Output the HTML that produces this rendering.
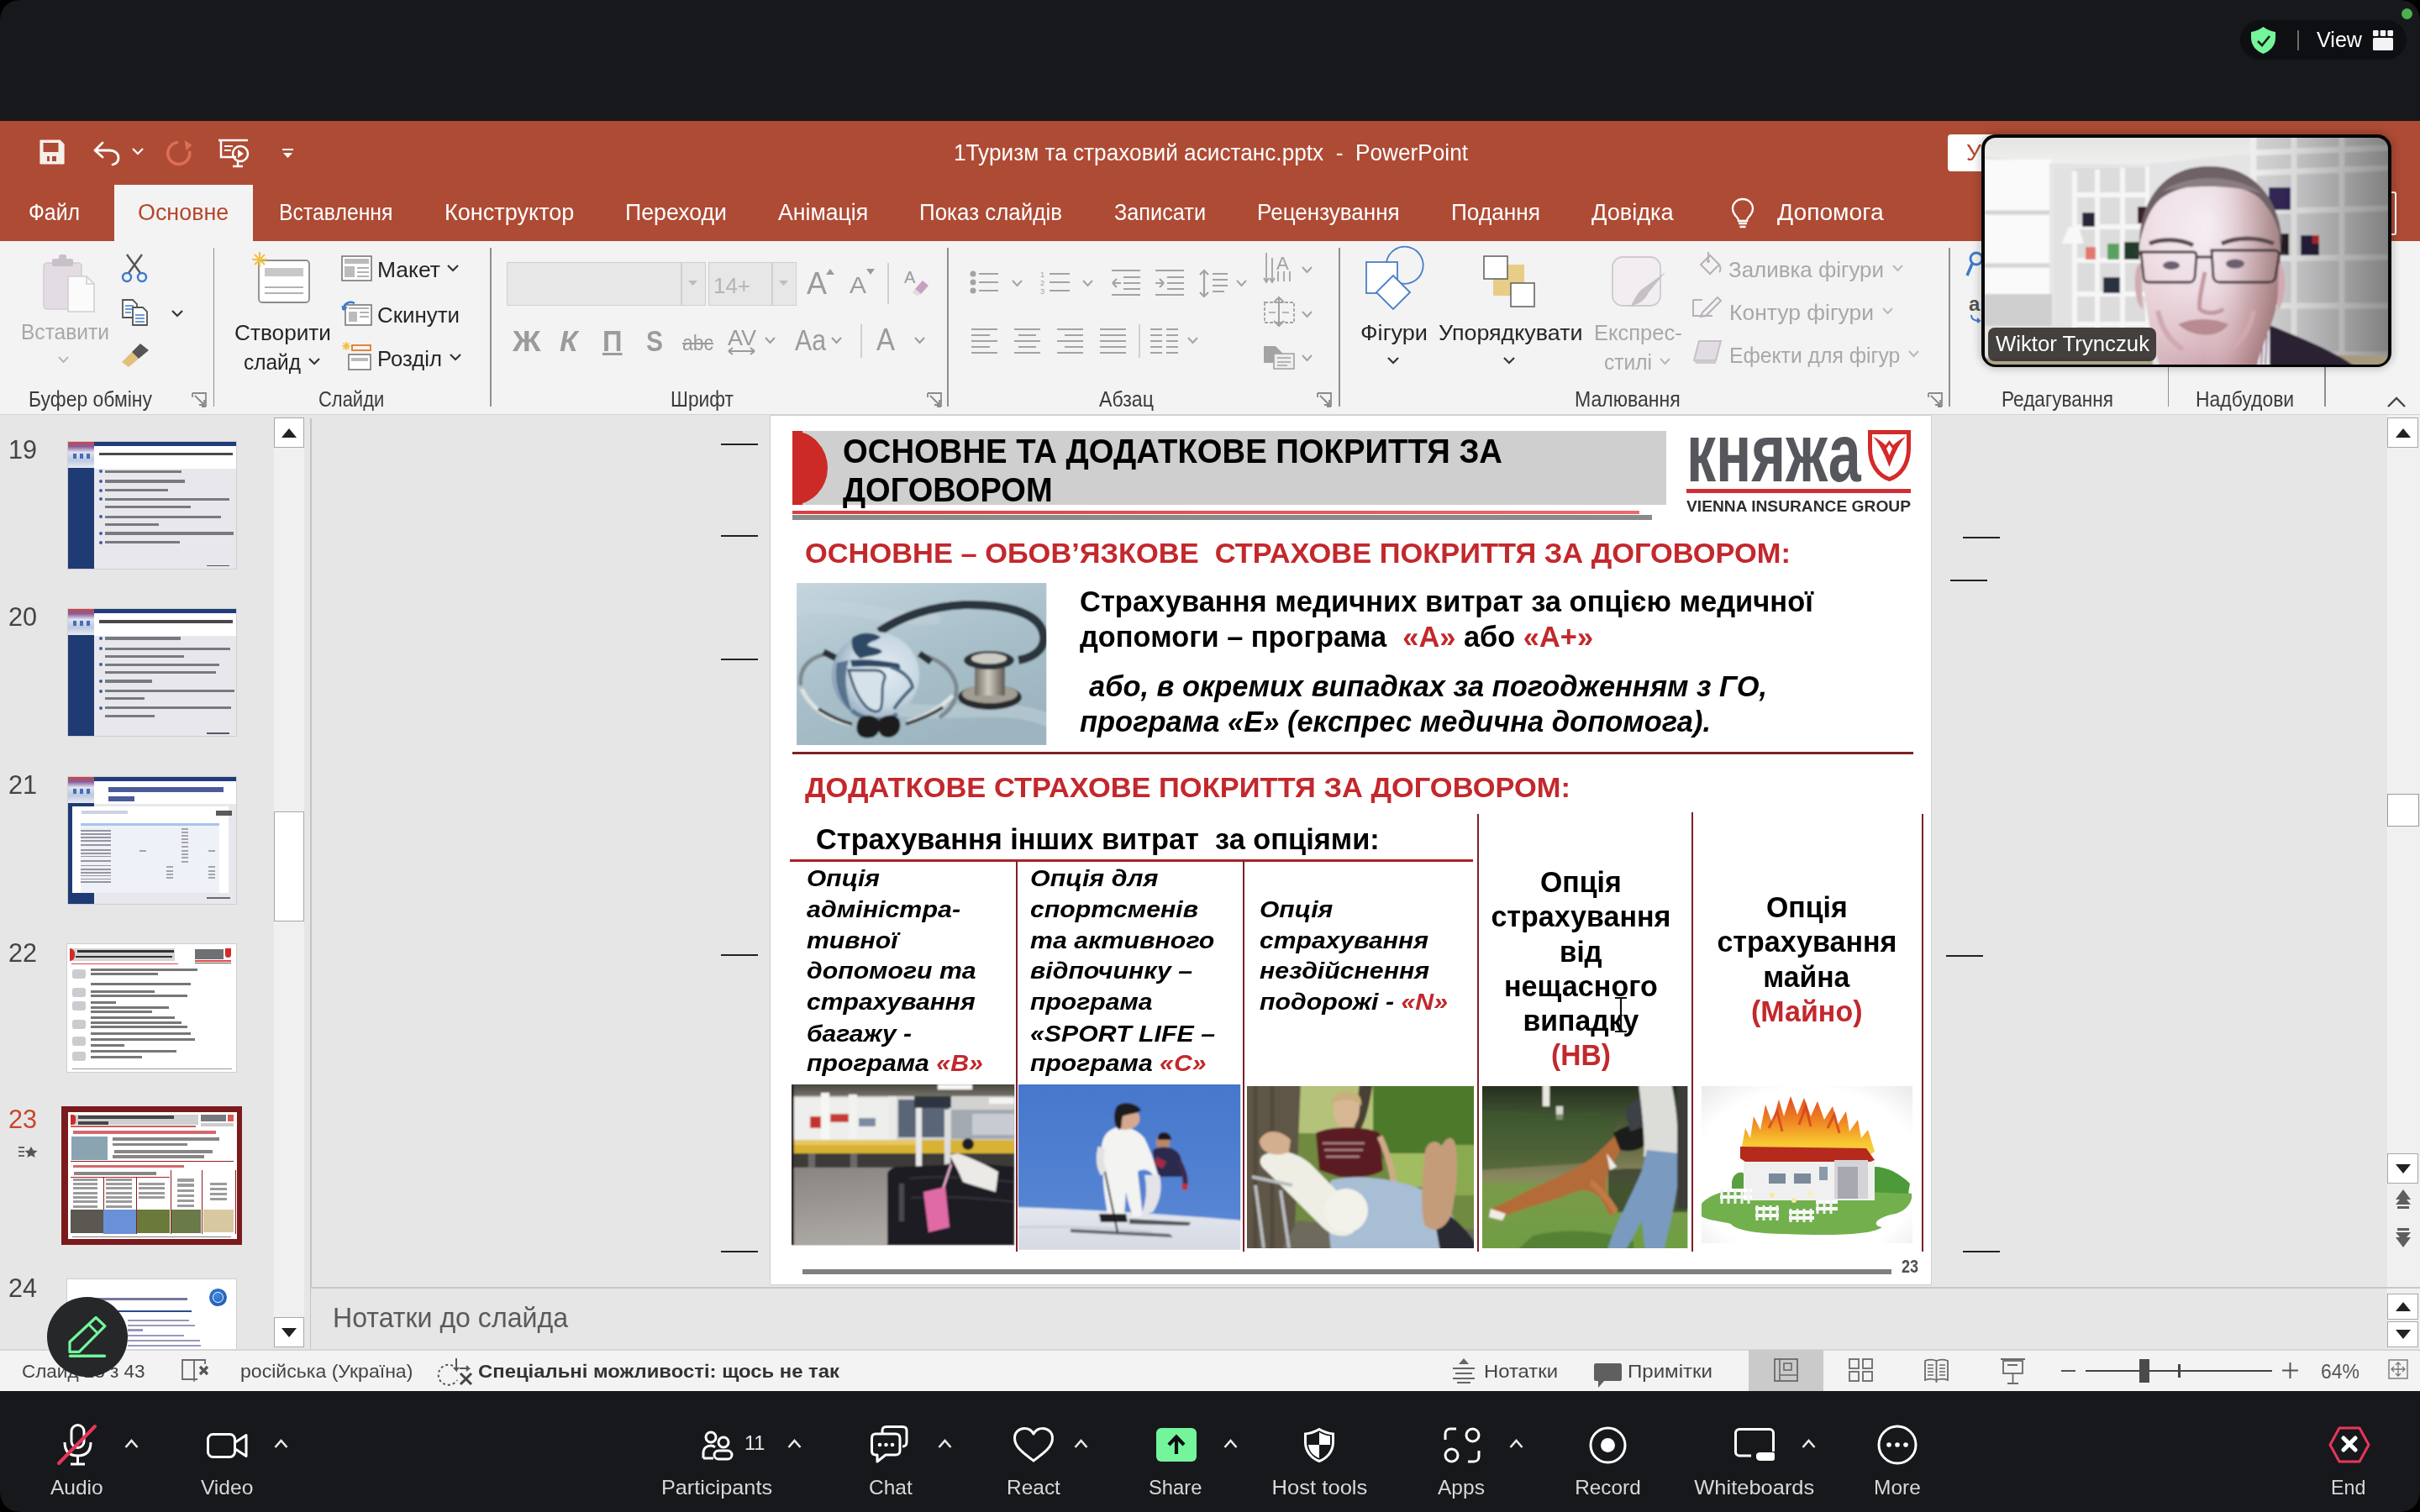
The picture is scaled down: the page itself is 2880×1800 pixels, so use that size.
<!DOCTYPE html><html><head><meta charset="utf-8"><style>
html,body{margin:0;padding:0;}
body{width:2880px;height:1800px;overflow:hidden;position:relative;background:#17181c;font-family:"Liberation Sans",sans-serif;}
.a{position:absolute;}
.t{white-space:pre;line-height:1;}
svg{overflow:visible;}
</style></head><body>
<div class="a" style="left:0.0px;top:0.0px;width:2880.0px;height:144.0px;background:#17181c;"></div>
<div class="a" style="left:2666.0px;top:24.0px;width:198.0px;height:47.0px;background:#0e0f12;border-radius:24px;"></div>
<svg class="a" style="left:2679.0px;top:32.0px;" width="29" height="32" viewBox="0 0 29 32"><path d="M14.5 0 C19 3.5 24 5 29 6 L29 13 C29 23 22 29 14.5 32 C7 29 0 23 0 13 L0 6 C5 5 10 3.5 14.5 0Z" fill="#74f59c"/><path d="M8 17 L13 22 L22 11" stroke="#1a1a1a" stroke-width="2.6" fill="none"/></svg>
<div class="a" style="left:2734.0px;top:36.0px;width:2.0px;height:24.0px;background:#6b6b6b;"></div>
<span class="a t" style="left:2757.0px;transform:scaleX(1.0047);transform-origin:0 50%;top:34.8px;font-size:25px;color:#ffffff;">View</span>
<svg class="a" style="left:2824.0px;top:36.0px;" width="24" height="24" viewBox="0 0 24 24"><rect x="0" y="0" width="6.5" height="7" rx="1.2" fill="#f3f3f6"/><rect x="8.7" y="0" width="6.5" height="7" rx="1.2" fill="#f3f3f6"/><rect x="17.4" y="0" width="6.6" height="7" rx="1.2" fill="#f3f3f6"/><rect x="0" y="9" width="24" height="15" rx="1.5" fill="#f3f3f6"/></svg>
<div class="a" style="left:2857.5px;top:9.5px;width:13.0px;height:13.0px;background:#4caf50;border-radius:50%;"></div>
<div class="a" style="left:0.0px;top:144.0px;width:2880.0px;height:143.0px;background:#ae4b35;"></div>
<svg class="a" style="left:47.0px;top:166.0px;" width="30" height="30" viewBox="0 0 30 30"><path d="M1.5 1.5 H24 L28.5 6 V28.5 H1.5 Z" fill="#f6f0ea" stroke="#f6f0ea" stroke-width="2.2" stroke-linejoin="round"/><path d="M4.5 4 H22.5 V15 H4.5Z" fill="#ae4b35"/><path d="M9 20 H12 V26 H9Z M15 20 H20 V26 H15Z" fill="#ae4b35"/></svg>
<svg class="a" style="left:110.0px;top:167.0px;" width="34" height="30" viewBox="0 0 34 30"><path d="M3 12 L12 3 M3 12 L12 20" stroke="#fff" stroke-width="2.8" fill="none" stroke-linecap="round"/><path d="M4 12 H20 C27 12 31 16 31 21 C31 25 28 28 24 29" stroke="#fff" stroke-width="2.8" fill="none" stroke-linecap="round"/></svg>
<svg class="a" style="left:157.0px;top:176.0px;" width="14" height="9" viewBox="0 0 14 9"><path d="M1 1 L7 7 L13 1" stroke="#fff" stroke-width="2.2" fill="none"/></svg>
<svg class="a" style="left:197.0px;top:166.0px;" width="32" height="32" viewBox="0 0 32 32"><path d="M15 3.5 A13 13 0 1 0 28.5 14" fill="none" stroke="#dd6e55" stroke-width="3.6"/><path d="M22.5 1 L31.5 6.5 L24.5 13.5 Z" fill="#dd6e55"/></svg>
<svg class="a" style="left:259.0px;top:165.0px;" width="37" height="34" viewBox="0 0 37 34"><path d="M1 2 H36" stroke="#fff" stroke-width="2.5"/><path d="M4 3 V22 H22" stroke="#fff" stroke-width="2.5" fill="none"/><path d="M8 9 H18 M8 14 H16" stroke="#fff" stroke-width="2"/><circle cx="27" cy="18" r="9" fill="none" stroke="#fff" stroke-width="2.5"/><path d="M24 13 L31 18 L24 23Z" fill="#fff"/><path d="M18 33 H30 M24 27 V33" stroke="#fff" stroke-width="2.5"/></svg>
<svg class="a" style="left:336.0px;top:177.0px;" width="13" height="11" viewBox="0 0 13 11"><path d="M0 1 H13" stroke="#fff" stroke-width="2"/><path d="M1 5 H12 L6.5 11 Z" fill="#fff"/></svg>
<span class="a t" style="left:1135.0px;transform:scaleX(0.9705);transform-origin:0 50%;top:169.1px;font-size:27px;color:#ffffff;">1Туризм та страховий асистанс.pptx  -  PowerPoint</span>
<div class="a" style="left:2318.0px;top:159.5px;width:120.0px;height:44.0px;background:#fff;border-radius:4px;"></div>
<span class="a t" style="left:2340.0px;transform:scaleX(1.0492);transform-origin:0 50%;top:169.1px;font-size:27px;color:#b7472a;">У</span>
<div class="a" style="left:2600.0px;top:228.0px;width:252.0px;height:52.0px;border:2px solid #fff;border-radius:3px;box-sizing:border-box;"></div>
<div class="a" style="left:136.0px;top:220.0px;width:165.0px;height:67.0px;background:#f3f3f3;"></div>
<span class="a t" style="left:34.0px;transform:scaleX(0.9188);transform-origin:0 50%;top:239.6px;font-size:27px;color:#ffffff;">Файл</span>
<span class="a t" style="left:163.7px;transform:scaleX(0.9963);transform-origin:0 50%;top:239.6px;font-size:27px;color:#b5462c;">Основне</span>
<span class="a t" style="left:331.5px;transform:scaleX(0.9184);transform-origin:0 50%;top:239.6px;font-size:27px;color:#ffffff;">Вставлення</span>
<span class="a t" style="left:528.6px;transform:scaleX(1.0029);transform-origin:0 50%;top:239.6px;font-size:27px;color:#ffffff;">Конструктор</span>
<span class="a t" style="left:744.0px;transform:scaleX(0.9891);transform-origin:0 50%;top:239.6px;font-size:27px;color:#ffffff;">Переходи</span>
<span class="a t" style="left:925.6px;transform:scaleX(0.9862);transform-origin:0 50%;top:239.6px;font-size:27px;color:#ffffff;">Анімація</span>
<span class="a t" style="left:1094.0px;transform:scaleX(0.9611);transform-origin:0 50%;top:239.6px;font-size:27px;color:#ffffff;">Показ слайдів</span>
<span class="a t" style="left:1325.6px;transform:scaleX(0.9372);transform-origin:0 50%;top:239.6px;font-size:27px;color:#ffffff;">Записати</span>
<span class="a t" style="left:1496.0px;transform:scaleX(0.9641);transform-origin:0 50%;top:239.6px;font-size:27px;color:#ffffff;">Рецензування</span>
<span class="a t" style="left:1727.0px;transform:scaleX(0.9721);transform-origin:0 50%;top:239.6px;font-size:27px;color:#ffffff;">Подання</span>
<span class="a t" style="left:1894.0px;transform:scaleX(1.0059);transform-origin:0 50%;top:239.6px;font-size:27px;color:#ffffff;">Довідка</span>
<span class="a t" style="left:2115.0px;transform:scaleX(1.0455);transform-origin:0 50%;top:239.6px;font-size:27px;color:#ffffff;">Допомога</span>
<svg class="a" style="left:2060.0px;top:235.0px;" width="28" height="37" viewBox="0 0 28 37"><path d="M14 2 C6.5 2 2 7.5 2 13.5 C2 18 4.5 21 7 23.5 C8.5 25 9 26.5 9 28 H19 C19 26.5 19.5 25 21 23.5 C23.5 21 26 18 26 13.5 C26 7.5 21.5 2 14 2Z" fill="none" stroke="#fff" stroke-width="2.3"/><path d="M9 31 H19 M10.5 35 H17.5" stroke="#fff" stroke-width="2.3"/></svg>
<div class="a" style="left:0.0px;top:287.0px;width:2880.0px;height:207.0px;background:#f3f3f3;"></div>
<div class="a" style="left:0.0px;top:493.0px;width:2880.0px;height:1.5px;background:#d2d2d2;"></div>
<div class="a" style="left:253.6px;top:295.0px;width:1.8px;height:189.0px;background:#8f8f8f;"></div>
<div class="a" style="left:583.3px;top:295.0px;width:1.8px;height:189.0px;background:#8f8f8f;"></div>
<div class="a" style="left:1127.3px;top:295.0px;width:1.8px;height:189.0px;background:#8f8f8f;"></div>
<div class="a" style="left:1593.3px;top:295.0px;width:1.8px;height:189.0px;background:#8f8f8f;"></div>
<div class="a" style="left:2319.3px;top:295.0px;width:1.8px;height:189.0px;background:#8f8f8f;"></div>
<div class="a" style="left:2579.6px;top:295.0px;width:1.8px;height:189.0px;background:#8f8f8f;"></div>
<div class="a" style="left:2766.3px;top:295.0px;width:1.8px;height:189.0px;background:#8f8f8f;"></div>
<span class="a t" style="left:33.6px;transform:scaleX(0.9180);transform-origin:0 50%;top:463.3px;font-size:25px;color:#3b3b3b;">Буфер обміну</span>
<span class="a t" style="left:378.5px;transform:scaleX(0.8780);transform-origin:0 50%;top:463.3px;font-size:25px;color:#3b3b3b;">Слайди</span>
<span class="a t" style="left:798.0px;transform:scaleX(0.9117);transform-origin:0 50%;top:463.3px;font-size:25px;color:#3b3b3b;">Шрифт</span>
<span class="a t" style="left:1308.0px;transform:scaleX(0.9267);transform-origin:0 50%;top:463.3px;font-size:25px;color:#3b3b3b;">Абзац</span>
<span class="a t" style="left:1874.0px;transform:scaleX(0.9222);transform-origin:0 50%;top:463.3px;font-size:25px;color:#3b3b3b;">Малювання</span>
<span class="a t" style="left:2381.5px;transform:scaleX(0.9041);transform-origin:0 50%;top:463.3px;font-size:25px;color:#3b3b3b;">Редагування</span>
<span class="a t" style="left:2612.8px;transform:scaleX(0.9175);transform-origin:0 50%;top:463.3px;font-size:25px;color:#3b3b3b;">Надбудови</span>
<svg class="a" style="left:228.0px;top:467.0px;" width="18" height="18" viewBox="0 0 18 18"><path d="M1 1 H17 V17 M1 1 V6 M12 17 H17" stroke="#8a8a8a" stroke-width="1.8" fill="none"/><path d="M4 4 L15 15 M9 15 H15 V9" stroke="#8a8a8a" stroke-width="1.8" fill="none"/></svg>
<svg class="a" style="left:1103.0px;top:467.0px;" width="18" height="18" viewBox="0 0 18 18"><path d="M1 1 H17 V17 M1 1 V6 M12 17 H17" stroke="#8a8a8a" stroke-width="1.8" fill="none"/><path d="M4 4 L15 15 M9 15 H15 V9" stroke="#8a8a8a" stroke-width="1.8" fill="none"/></svg>
<svg class="a" style="left:1567.0px;top:467.0px;" width="18" height="18" viewBox="0 0 18 18"><path d="M1 1 H17 V17 M1 1 V6 M12 17 H17" stroke="#8a8a8a" stroke-width="1.8" fill="none"/><path d="M4 4 L15 15 M9 15 H15 V9" stroke="#8a8a8a" stroke-width="1.8" fill="none"/></svg>
<svg class="a" style="left:2294.0px;top:467.0px;" width="18" height="18" viewBox="0 0 18 18"><path d="M1 1 H17 V17 M1 1 V6 M12 17 H17" stroke="#8a8a8a" stroke-width="1.8" fill="none"/><path d="M4 4 L15 15 M9 15 H15 V9" stroke="#8a8a8a" stroke-width="1.8" fill="none"/></svg>
<svg class="a" style="left:2840.0px;top:472.0px;" width="24" height="14" viewBox="0 0 24 14"><path d="M2 12 L12 2 L22 12" stroke="#444" stroke-width="2.4" fill="none"/></svg>
<svg class="a" style="left:50.0px;top:303.0px;" width="63" height="69" viewBox="0 0 63 69"><rect x="2" y="10" width="45" height="55" rx="4" fill="#e3dde3" stroke="#d3cdd3" stroke-width="1.5"/><rect x="12" y="5" width="25" height="9" rx="2" fill="#c8c0c8"/><rect x="20" y="0" width="9" height="7" rx="2" fill="#c8c0c8"/><path d="M31 26 H53 L62 35 V68 H31 Z" fill="#fbfbfb" stroke="#cfcfcf" stroke-width="1.6"/><path d="M53 26 V35 H62" fill="none" stroke="#cfcfcf" stroke-width="1.6"/></svg>
<span class="a t" style="left:25.0px;transform:scaleX(0.9820);transform-origin:0 50%;top:382.8px;font-size:25px;color:#a8a8a8;">Вставити</span>
<svg class="a" style="left:69.0px;top:424.0px;" width="13" height="8" viewBox="0 0 13 8"><path d="M1 1 L6.5 7 L12 1" stroke="#b8b8b8" stroke-width="2" fill="none"/></svg>
<svg class="a" style="left:145.0px;top:303.0px;" width="30" height="33" viewBox="0 0 30 33"><path d="M6 0 L22 22 M24 0 L8 22" stroke="#555" stroke-width="2.4"/><circle cx="6" cy="27" r="5" fill="none" stroke="#3f79c9" stroke-width="2.4"/><circle cx="24" cy="27" r="5" fill="none" stroke="#3f79c9" stroke-width="2.4"/></svg>
<svg class="a" style="left:145.0px;top:356.0px;" width="31" height="32" viewBox="0 0 31 32"><path d="M1 1 H13 L18 6 V22 H1 Z" fill="#fff" stroke="#555" stroke-width="1.8"/><path d="M13 10 H25 L30 15 V31 H13 Z" fill="#fff" stroke="#555" stroke-width="1.8"/><path d="M4 8 H14 M4 12 H14 M4 16 H11 M16 19 H27 M16 23 H27 M16 27 H27" stroke="#3f79c9" stroke-width="1.4"/></svg>
<svg class="a" style="left:204.0px;top:369.0px;" width="14" height="9" viewBox="0 0 14 9"><path d="M1 1 L7 7 L13 1" stroke="#333" stroke-width="2.2" fill="none"/></svg>
<svg class="a" style="left:143.0px;top:409.0px;" width="35" height="29" viewBox="0 0 35 29"><path d="M2 22 L14 10 L22 18 L10 28 Z" fill="#e2c07a"/><path d="M14 10 L24 0 L34 8 L22 18Z" fill="#555"/></svg>
<svg class="a" style="left:300.0px;top:300.0px;" width="70" height="62" viewBox="0 0 70 62"><rect x="8" y="10" width="60" height="50" rx="4" fill="#fff" stroke="#8c8c8c" stroke-width="1.8"/><rect x="15" y="19" width="46" height="10" fill="#c8c8c8"/><path d="M15 42 H61 M15 49 H61" stroke="#9a9a9a" stroke-width="1.4"/><g stroke="#f0c040" stroke-width="2"><path d="M9 0 V18 M0 9 H18 M3 3 L15 15 M15 3 L3 15"/></g></svg>
<span class="a t" style="left:279.0px;transform:scaleX(1.0483);transform-origin:0 50%;top:383.6px;font-size:25px;color:#262626;">Створити</span>
<span class="a t" style="left:290.0px;transform:scaleX(0.9778);transform-origin:0 50%;top:419.3px;font-size:25px;color:#262626;">слайд</span>
<svg class="a" style="left:367.0px;top:426.0px;" width="14" height="9" viewBox="0 0 14 9"><path d="M1 1 L7 7 L13 1" stroke="#333" stroke-width="2.2" fill="none"/></svg>
<svg class="a" style="left:406.0px;top:304.0px;" width="37" height="31" viewBox="0 0 37 31"><rect x="1" y="1" width="35" height="29" fill="#fff" stroke="#777" stroke-width="1.6"/><rect x="4" y="4" width="29" height="6" fill="#bbb"/><rect x="4" y="13" width="12" height="13" fill="#bbb"/><path d="M19 15 H33 M19 20 H33 M19 25 H33" stroke="#999" stroke-width="1.4"/></svg>
<span class="a t" style="left:449.0px;transform:scaleX(1.0598);transform-origin:0 50%;top:309.2px;font-size:25px;color:#262626;">Макет</span>
<svg class="a" style="left:532.0px;top:315.0px;" width="14" height="9" viewBox="0 0 14 9"><path d="M1 1 L7 7 L13 1" stroke="#333" stroke-width="2.2" fill="none"/></svg>
<svg class="a" style="left:406.0px;top:357.0px;" width="37" height="31" viewBox="0 0 37 31"><rect x="5" y="6" width="31" height="24" fill="#fff" stroke="#777" stroke-width="1.6"/><rect x="9" y="14" width="10" height="12" fill="#bbb"/><path d="M22 15 H33 M22 20 H33 M9 10 H33" stroke="#999" stroke-width="1.4"/><path d="M2 12 C3 4 10 1 16 4" stroke="#3f79c9" stroke-width="2.4" fill="none"/><path d="M0 7 L3 13 L8 9" fill="#3f79c9"/></svg>
<span class="a t" style="left:449.0px;transform:scaleX(1.0350);transform-origin:0 50%;top:362.8px;font-size:25px;color:#262626;">Скинути</span>
<svg class="a" style="left:407.0px;top:407.0px;" width="35" height="34" viewBox="0 0 35 34"><g stroke="#f0c040" stroke-width="1.6"><path d="M5 0 V10 M0 5 H10 M1.5 1.5 L8.5 8.5 M8.5 1.5 L1.5 8.5"/></g><rect x="12" y="4" width="22" height="6" fill="none" stroke="#e07a2a" stroke-width="1.8"/><rect x="8" y="15" width="26" height="18" fill="#fff" stroke="#777" stroke-width="1.6"/><rect x="11" y="19" width="20" height="4" fill="#bbb"/></svg>
<span class="a t" style="left:449.0px;transform:scaleX(1.0288);transform-origin:0 50%;top:414.8px;font-size:25px;color:#262626;">Розділ</span>
<svg class="a" style="left:535.0px;top:421.0px;" width="14" height="9" viewBox="0 0 14 9"><path d="M1 1 L7 7 L13 1" stroke="#333" stroke-width="2.2" fill="none"/></svg>
<div class="a" style="left:603.0px;top:312.0px;width:237.0px;height:52.0px;background:#e7e7e7;border:1.5px solid #cfcfcf;box-sizing:border-box;"></div>
<div class="a" style="left:810.0px;top:313.0px;width:1.5px;height:50.0px;background:#d0d0d0;"></div>
<svg class="a" style="left:819.0px;top:334.0px;" width="11" height="7" viewBox="0 0 11 7"><path d="M0 0 H11 L5.5 6Z" fill="#bdbdbd"/></svg>
<div class="a" style="left:843.0px;top:312.0px;width:105.0px;height:52.0px;background:#e7e7e7;border:1.5px solid #cfcfcf;box-sizing:border-box;"></div>
<div class="a" style="left:918.0px;top:313.0px;width:1.5px;height:50.0px;background:#d0d0d0;"></div>
<svg class="a" style="left:927.0px;top:334.0px;" width="11" height="7" viewBox="0 0 11 7"><path d="M0 0 H11 L5.5 6Z" fill="#bdbdbd"/></svg>
<span class="a t" style="left:849.0px;transform:scaleX(0.9975);transform-origin:0 50%;top:327.4px;font-size:26px;color:#b4b4b4;">14+</span>
<span class="a t" style="left:960.0px;transform:scaleX(0.9993);transform-origin:0 50%;top:319.5px;font-size:36px;color:#9b9b9b;">A</span>
<svg class="a" style="left:983.0px;top:320.0px;" width="10" height="7" viewBox="0 0 10 7"><path d="M0 7 L5 0 L10 7Z" fill="#9b9b9b"/></svg>
<span class="a t" style="left:1011.0px;transform:scaleX(1.0702);transform-origin:0 50%;top:326.3px;font-size:28px;color:#9b9b9b;">A</span>
<svg class="a" style="left:1031.0px;top:320.0px;" width="10" height="7" viewBox="0 0 10 7"><path d="M0 0 L5 7 L10 0Z" fill="#9b9b9b"/></svg>
<div class="a" style="left:1056.0px;top:313.0px;width:1.5px;height:49.0px;background:#d0d0d0;"></div>
<svg class="a" style="left:1076.0px;top:320.0px;" width="30" height="34" viewBox="0 0 30 34"><text x="0" y="17" font-size="20" fill="#9b9b9b" font-family="Liberation Sans">A</text><path d="M13 24 L22 14 L29 20 L20 30 Z" fill="#c9a0c0"/><path d="M13 24 L20 30 L15 32 L10 28Z" fill="#ddd"/></svg>
<span class="a t" style="left:609.5px;transform:scaleX(1.0588);transform-origin:0 50%;top:387.9px;font-size:35px;color:#9b9b9b;font-weight:700;">Ж</span>
<span class="a t" style="left:665.5px;transform:scaleX(0.9985);transform-origin:0 50%;top:387.9px;font-size:35px;color:#9b9b9b;font-weight:700;font-style:italic;">К</span>
<span class="a t" style="left:717.0px;transform:scaleX(0.9342);transform-origin:0 50%;top:387.9px;font-size:35px;color:#9b9b9b;font-weight:700;text-decoration:underline;">П</span>
<span class="a t" style="left:769.0px;transform:scaleX(0.8562);transform-origin:0 50%;top:387.9px;font-size:35px;color:#9b9b9b;font-weight:700;">S</span>
<span class="a t" style="left:812.0px;transform:scaleX(0.8826);transform-origin:0 50%;top:395.0px;font-size:26px;color:#9b9b9b;text-decoration:line-through;">abc</span>
<span class="a t" style="left:865.5px;transform:scaleX(1.0377);transform-origin:0 50%;top:389.0px;font-size:26px;color:#9b9b9b;">AV</span>
<svg class="a" style="left:865.0px;top:413.0px;" width="35" height="10" viewBox="0 0 35 10"><path d="M2 5 H33 M2 5 L7 1 M2 5 L7 9 M33 5 L28 1 M33 5 L28 9" stroke="#9b9b9b" stroke-width="2" fill="none"/></svg>
<span class="a t" style="left:945.6px;transform:scaleX(0.8642);transform-origin:0 50%;top:387.4px;font-size:35px;color:#9b9b9b;">Aa</span>
<span class="a t" style="left:1042.7px;transform:scaleX(0.8911);transform-origin:0 50%;top:385.7px;font-size:37px;color:#9b9b9b;">A</span>
<div class="a" style="left:1024.0px;top:386.0px;width:1.5px;height:40.0px;background:#d0d0d0;"></div>
<svg class="a" style="left:910.0px;top:401.0px;" width="13" height="8" viewBox="0 0 13 8"><path d="M1 1 L6.5 7 L12 1" stroke="#9b9b9b" stroke-width="2" fill="none"/></svg>
<svg class="a" style="left:989.0px;top:401.0px;" width="13" height="8" viewBox="0 0 13 8"><path d="M1 1 L6.5 7 L12 1" stroke="#9b9b9b" stroke-width="2" fill="none"/></svg>
<svg class="a" style="left:1088.0px;top:401.0px;" width="13" height="8" viewBox="0 0 13 8"><path d="M1 1 L6.5 7 L12 1" stroke="#9b9b9b" stroke-width="2" fill="none"/></svg>
<svg class="a" style="left:1154.0px;top:322.0px;" width="35" height="28" viewBox="0 0 35 28"><circle cx="4" cy="4" r="3.5" fill="#a3a3a3"/><circle cx="4" cy="14" r="3.5" fill="#a3a3a3"/><circle cx="4" cy="24" r="3.5" fill="#a3a3a3"/><path d="M11 4 H34 M11 14 H34 M11 24 H34" stroke="#a3a3a3" stroke-width="2"/></svg>
<svg class="a" style="left:1238.0px;top:321.0px;" width="36" height="30" viewBox="0 0 36 30"><text x="0" y="9" font-size="9" fill="#a3a3a3" font-family="Liberation Sans">1</text><text x="0" y="19" font-size="9" fill="#a3a3a3" font-family="Liberation Sans">2</text><text x="0" y="29" font-size="9" fill="#a3a3a3" font-family="Liberation Sans">3</text><path d="M11 5 H35 M11 15 H35 M11 25 H35" stroke="#a3a3a3" stroke-width="2"/></svg>
<svg class="a" style="left:1323.0px;top:320.0px;" width="35" height="33" viewBox="0 0 35 33"><path d="M0 2 H34 M14 10 H34 M14 17 H34 M14 24 H34 M0 31 H34" stroke="#a3a3a3" stroke-width="2"/><path d="M11 17 H1 M1 17 L6 12 M1 17 L6 22" stroke="#a3a3a3" stroke-width="2.2" fill="none"/></svg>
<svg class="a" style="left:1375.0px;top:320.0px;" width="35" height="33" viewBox="0 0 35 33"><path d="M0 2 H34 M14 10 H34 M14 17 H34 M14 24 H34 M0 31 H34" stroke="#a3a3a3" stroke-width="2"/><path d="M0 17 H10 M10 17 L5 12 M10 17 L5 22" stroke="#a3a3a3" stroke-width="2.2" fill="none"/></svg>
<svg class="a" style="left:1427.0px;top:320.0px;" width="35" height="35" viewBox="0 0 35 35"><path d="M6 2 V33 M1 7 L6 2 L11 7 M1 28 L6 33 L11 28" stroke="#a3a3a3" stroke-width="2.2" fill="none"/><path d="M16 6 H34 M16 13 H34 M16 20 H34 M16 27 H30" stroke="#a3a3a3" stroke-width="2"/></svg>
<svg class="a" style="left:1204.0px;top:333.0px;" width="13" height="8" viewBox="0 0 13 8"><path d="M1 1 L6.5 7 L12 1" stroke="#a3a3a3" stroke-width="2" fill="none"/></svg>
<svg class="a" style="left:1288.0px;top:333.0px;" width="13" height="8" viewBox="0 0 13 8"><path d="M1 1 L6.5 7 L12 1" stroke="#a3a3a3" stroke-width="2" fill="none"/></svg>
<svg class="a" style="left:1471.0px;top:333.0px;" width="13" height="8" viewBox="0 0 13 8"><path d="M1 1 L6.5 7 L12 1" stroke="#a3a3a3" stroke-width="2" fill="none"/></svg>
<svg class="a" style="left:1156.0px;top:390.0px;" width="32" height="32" viewBox="0 0 32 32"><path d="M0 2 H31 M0 9 H22 M0 16 H31 M0 23 H22 M0 30 H31" stroke="#a3a3a3" stroke-width="2"/></svg>
<svg class="a" style="left:1207.0px;top:390.0px;" width="32" height="32" viewBox="0 0 32 32"><path d="M0 2 H31 M5 9 H26 M0 16 H31 M5 23 H26 M0 30 H31" stroke="#a3a3a3" stroke-width="2"/></svg>
<svg class="a" style="left:1258.0px;top:390.0px;" width="32" height="32" viewBox="0 0 32 32"><path d="M0 2 H31 M9 9 H31 M0 16 H31 M9 23 H31 M0 30 H31" stroke="#a3a3a3" stroke-width="2"/></svg>
<svg class="a" style="left:1309.0px;top:390.0px;" width="32" height="32" viewBox="0 0 32 32"><path d="M0 2 H31 M0 9 H31 M0 16 H31 M0 23 H31 M0 30 H31" stroke="#a3a3a3" stroke-width="2"/></svg>
<div class="a" style="left:1355.0px;top:386.0px;width:1.5px;height:40.0px;background:#d0d0d0;"></div>
<svg class="a" style="left:1369.0px;top:390.0px;" width="33" height="32" viewBox="0 0 33 32"><path d="M0 2 H14 M0 9 H14 M0 16 H14 M0 23 H14 M0 30 H14 M19 2 H33 M19 9 H33 M19 16 H33 M19 23 H33 M19 30 H33" stroke="#a3a3a3" stroke-width="2"/></svg>
<svg class="a" style="left:1413.0px;top:401.0px;" width="13" height="8" viewBox="0 0 13 8"><path d="M1 1 L6.5 7 L12 1" stroke="#a3a3a3" stroke-width="2" fill="none"/></svg>
<svg class="a" style="left:1504.0px;top:301.0px;" width="37" height="38" viewBox="0 0 37 38"><text x="15" y="20" font-size="22" fill="#a3a3a3" font-family="Liberation Sans">A</text><path d="M3 0 V34 M10 6 V34 M17 22 V34 M24 22 V34 M31 22 V34" stroke="#a3a3a3" stroke-width="1.8"/><path d="M0 30 L3 35 L6 30 M7 30 L10 35 L13 30" stroke="#a3a3a3" stroke-width="1.8" fill="none"/></svg>
<svg class="a" style="left:1504.0px;top:354.0px;" width="37" height="36" viewBox="0 0 37 36"><rect x="1" y="6" width="35" height="24" fill="none" stroke="#a3a3a3" stroke-width="1.8" stroke-dasharray="4 2"/><path d="M18 0 V34 M12 6 L18 0 L24 6 M12 28 L18 34 L24 28" stroke="#a3a3a3" stroke-width="2" fill="none"/><path d="M6 18 H14 M22 18 H30" stroke="#a3a3a3" stroke-width="1.5"/></svg>
<svg class="a" style="left:1504.0px;top:412.0px;" width="37" height="28" viewBox="0 0 37 28"><path d="M0 0 H14 L24 10 L14 20 H0 Z" fill="#a3a3a3"/><rect x="12" y="9" width="24" height="18" fill="#eee" stroke="#a3a3a3" stroke-width="1.6"/><path d="M16 14 H32 M16 19 H32 M16 23 H28" stroke="#a3a3a3" stroke-width="1.3"/></svg>
<svg class="a" style="left:1549.0px;top:317.0px;" width="13" height="8" viewBox="0 0 13 8"><path d="M1 1 L6.5 7 L12 1" stroke="#a3a3a3" stroke-width="2" fill="none"/></svg>
<svg class="a" style="left:1549.0px;top:370.0px;" width="13" height="8" viewBox="0 0 13 8"><path d="M1 1 L6.5 7 L12 1" stroke="#a3a3a3" stroke-width="2" fill="none"/></svg>
<svg class="a" style="left:1549.0px;top:422.0px;" width="13" height="8" viewBox="0 0 13 8"><path d="M1 1 L6.5 7 L12 1" stroke="#a3a3a3" stroke-width="2" fill="none"/></svg>
<svg class="a" style="left:1625.0px;top:300.0px;" width="68" height="90" viewBox="0 0 68 90"><rect x="1" y="12" width="37" height="37" fill="#fff" stroke="#4a7ec9" stroke-width="1.8"/><path d="M38 36 A22 22 0 1 0 25 12" fill="none" stroke="#4a7ec9" stroke-width="1.8"/><path d="M33 28 L53 48 L33 68 L13 48 Z" fill="#fff" stroke="#4a7ec9" stroke-width="1.8"/></svg>
<span class="a t" style="left:1619.0px;transform:scaleX(1.0843);transform-origin:0 50%;top:383.8px;font-size:25px;color:#262626;">Фігури</span>
<svg class="a" style="left:1651.0px;top:425.0px;" width="14" height="9" viewBox="0 0 14 9"><path d="M1 1 L7 7 L13 1" stroke="#333" stroke-width="2.2" fill="none"/></svg>
<svg class="a" style="left:1765.0px;top:304.0px;" width="62" height="62" viewBox="0 0 62 62"><rect x="12" y="11" width="37" height="37" fill="#e8cd86"/><rect x="1" y="1" width="28" height="27" fill="#fff" stroke="#666" stroke-width="1.6"/><rect x="33" y="33" width="28" height="28" fill="#fff" stroke="#666" stroke-width="1.6"/></svg>
<span class="a t" style="left:1712.0px;transform:scaleX(1.0757);transform-origin:0 50%;top:383.8px;font-size:25px;color:#262626;">Упорядкувати</span>
<svg class="a" style="left:1789.0px;top:425.0px;" width="14" height="9" viewBox="0 0 14 9"><path d="M1 1 L7 7 L13 1" stroke="#333" stroke-width="2.2" fill="none"/></svg>
<svg class="a" style="left:1918.0px;top:305.0px;" width="66" height="64" viewBox="0 0 66 64"><rect x="1" y="1" width="57" height="58" rx="12" fill="#f1edf1" stroke="#cfc9cf" stroke-width="1.8"/><path d="M64 19 L44 43 L38 38 Z" fill="#c6c0c6"/><path d="M38 38 L44 43 C40 52 33 57 23 59 C27 52 31 42 38 38Z" fill="#c6c0c6"/></svg>
<span class="a t" style="left:1896.7px;transform:scaleX(1.0217);transform-origin:0 50%;top:383.8px;font-size:25px;color:#a8a8a8;">Експрес-</span>
<span class="a t" style="left:1909.0px;transform:scaleX(0.9817);transform-origin:0 50%;top:419.1px;font-size:25px;color:#a8a8a8;">стилі</span>
<svg class="a" style="left:1975.0px;top:426.0px;" width="13" height="8" viewBox="0 0 13 8"><path d="M1 1 L6.5 7 L12 1" stroke="#b8b8b8" stroke-width="2" fill="none"/></svg>
<svg class="a" style="left:2021.0px;top:300.0px;" width="28" height="29" viewBox="0 0 28 29"><path d="M3 15 L14 4 L25 15 L14 26 Z" fill="none" stroke="#b8b0b8" stroke-width="2"/><path d="M12 0 V10" stroke="#b8b0b8" stroke-width="2"/><circle cx="12" cy="11" r="2" fill="#b8b0b8"/><path d="M25 15 C27 19 27 22 25 24" stroke="#b8b0b8" stroke-width="2" fill="none"/></svg>
<span class="a t" style="left:2057.0px;transform:scaleX(1.0363);transform-origin:0 50%;top:308.8px;font-size:25px;color:#a8a8a8;">Заливка фігури</span>
<svg class="a" style="left:2252.0px;top:315.0px;" width="13" height="8" viewBox="0 0 13 8"><path d="M1 1 L6.5 7 L12 1" stroke="#b8b8b8" stroke-width="2" fill="none"/></svg>
<svg class="a" style="left:2014.0px;top:352.0px;" width="35" height="25" viewBox="0 0 35 25"><path d="M1 5 V24 H24" fill="none" stroke="#b8b0b8" stroke-width="2"/><path d="M1 5 H12" stroke="#b8b0b8" stroke-width="2"/><path d="M12 20 L30 2 L34 6 L16 24 L10 25Z" fill="none" stroke="#b8b0b8" stroke-width="2"/></svg>
<span class="a t" style="left:2057.7px;transform:scaleX(1.0591);transform-origin:0 50%;top:359.6px;font-size:25px;color:#a8a8a8;">Контур фігури</span>
<svg class="a" style="left:2240.0px;top:366.0px;" width="13" height="8" viewBox="0 0 13 8"><path d="M1 1 L6.5 7 L12 1" stroke="#b8b8b8" stroke-width="2" fill="none"/></svg>
<svg class="a" style="left:2014.0px;top:405.0px;" width="35" height="29" viewBox="0 0 35 29"><path d="M8 1 H34 L28 24 H2 Z" fill="#e2dde2" stroke="#c7c0c7" stroke-width="2"/><path d="M2 24 L4 28 H28 L28 24" fill="#cfc9cf"/></svg>
<span class="a t" style="left:2057.7px;transform:scaleX(0.9881);transform-origin:0 50%;top:410.8px;font-size:25px;color:#a8a8a8;">Ефекти для фігур</span>
<svg class="a" style="left:2271.0px;top:417.0px;" width="13" height="8" viewBox="0 0 13 8"><path d="M1 1 L6.5 7 L12 1" stroke="#b8b8b8" stroke-width="2" fill="none"/></svg>
<svg class="a" style="left:2340.0px;top:300.0px;" width="20" height="32" viewBox="0 0 20 32"><circle cx="12" cy="8" r="7" fill="none" stroke="#3f79c9" stroke-width="3"/><path d="M7 14 L1 28" stroke="#3f79c9" stroke-width="3.5"/></svg>
<span class="a t" style="left:2343.0px;top:349.7px;font-size:24px;color:#555;font-weight:700;">a</span>
<svg class="a" style="left:2345.0px;top:374.0px;" width="14" height="10" viewBox="0 0 14 10"><path d="M1 1 C1 6 5 8 11 8 M8 5 L11 8 L8 10" stroke="#3f79c9" stroke-width="2" fill="none"/></svg>
<div class="a" style="left:0.0px;top:494.0px;width:2880.0px;height:1113.0px;background:#e6e6e6;"></div>
<div class="a" style="left:0.0px;top:494.0px;width:369.0px;height:1113.0px;background:#e6e6e6;"></div>
<div class="a" style="left:369.0px;top:498.0px;width:1.5px;height:1108.0px;background:#c4c4c4;"></div>
<div class="a" style="left:326.0px;top:497.0px;width:36.0px;height:1107.0px;background:#f0f0f0;"></div>
<div class="a" style="left:326.0px;top:497.0px;width:36.0px;height:36.0px;background:#ffffff;border:1.5px solid #a8a8a8;box-sizing:border-box;"></div>
<svg class="a" style="left:335.0px;top:509.5px;" width="18" height="11" viewBox="0 0 18 11"><path d="M0 11 L9 0 L18 11Z" fill="#222"/></svg>
<div class="a" style="left:326.0px;top:966.0px;width:36.0px;height:131.0px;background:#ffffff;border:1.5px solid #a8a8a8;box-sizing:border-box;"></div>
<div class="a" style="left:326.0px;top:1568.0px;width:36.0px;height:36.0px;background:#ffffff;border:1.5px solid #a8a8a8;box-sizing:border-box;"></div>
<svg class="a" style="left:335.0px;top:1580.5px;" width="18" height="11" viewBox="0 0 18 11"><path d="M0 0 L9 11 L18 0Z" fill="#222"/></svg>
<span class="a t" style="left:10.0px;transform:scaleX(0.9552);transform-origin:0 50%;top:518.5px;font-size:32px;color:#444444;">19</span>
<span class="a t" style="left:10.0px;transform:scaleX(0.9552);transform-origin:0 50%;top:717.5px;font-size:32px;color:#444444;">20</span>
<span class="a t" style="left:10.0px;transform:scaleX(0.9552);transform-origin:0 50%;top:917.9px;font-size:32px;color:#444444;">21</span>
<span class="a t" style="left:10.0px;transform:scaleX(0.9552);transform-origin:0 50%;top:1117.9px;font-size:32px;color:#444444;">22</span>
<span class="a t" style="left:10.0px;transform:scaleX(0.9552);transform-origin:0 50%;top:1315.9px;font-size:32px;color:#c8462a;">23</span>
<span class="a t" style="left:10.0px;transform:scaleX(0.9552);transform-origin:0 50%;top:1516.5px;font-size:32px;color:#444444;">24</span>
<svg class="a" style="left:22.0px;top:1365.0px;" width="23" height="13" viewBox="0 0 23 13"><path d="M0 1 H7 M0 6 H7 M0 11 H7" stroke="#666" stroke-width="1.8"/><path d="M15 0 L17.5 4.5 L22.5 5 L18.5 8.5 L19.7 13 L15 10.5 L10.3 13 L11.5 8.5 L7.5 5 L12.5 4.5Z" fill="#555"/></svg>
<div class="a" style="left:80.7px;top:525.7px;width:200.3px;height:151.2px;background:#e8e8ec;box-shadow:0 0 0 1px #cfcfcf;"></div>
<div class="a" style="left:80.7px;top:525.7px;width:200.3px;height:5.0px;background:#1f3d7a;"></div>
<div class="a" style="left:111.7px;top:530.7px;width:169.3px;height:27.0px;background:#ffffff;"></div>
<div class="a" style="left:80.7px;top:556.7px;width:31.3px;height:120.2px;background:#1f3b74;"></div>
<div class="a" style="left:80.7px;top:525.7px;width:31.3px;height:31px;background:linear-gradient(180deg,#c84848 0%,#8a5a9a 18%,#dde4f0 40%,#bcc9e0 70%,#e8ecf4 100%);"></div>
<div class="a" style="left:86.7px;top:539.7px;width:4.0px;height:6.0px;background:#4a6ab8;"></div>
<div class="a" style="left:94.7px;top:539.7px;width:4.0px;height:6.0px;background:#4a6ab8;"></div>
<div class="a" style="left:102.7px;top:539.7px;width:4.0px;height:6.0px;background:#4a6ab8;"></div>
<div class="a" style="left:118.4px;top:538.7px;width:159.0px;height:3.6px;background:#2a2a2a;opacity:0.85;filter:blur(0.4px);"></div>
<div class="a" style="left:118.2px;top:559.3px;width:4.0px;height:4.0px;background:#3a5ab0;border-radius:50%;"></div>
<div class="a" style="left:124.7px;top:559.9px;width:91.6px;height:3.2px;background:#6e6e76;opacity:0.9;filter:blur(0.4px);"></div>
<div class="a" style="left:118.2px;top:570.8px;width:4.0px;height:4.0px;background:#3a5ab0;border-radius:50%;"></div>
<div class="a" style="left:124.7px;top:571.4px;width:95.0px;height:3.2px;background:#6e6e76;opacity:0.9;filter:blur(0.4px);"></div>
<div class="a" style="left:118.2px;top:581.5px;width:4.0px;height:4.0px;background:#3a5ab0;border-radius:50%;"></div>
<div class="a" style="left:124.7px;top:582.1px;width:75.4px;height:3.2px;background:#6e6e76;opacity:0.9;filter:blur(0.4px);"></div>
<div class="a" style="left:118.2px;top:592.3px;width:4.0px;height:4.0px;background:#3a5ab0;border-radius:50%;"></div>
<div class="a" style="left:124.7px;top:592.9px;width:148.2px;height:3.2px;background:#6e6e76;opacity:0.9;filter:blur(0.4px);"></div>
<div class="a" style="left:124.7px;top:602.0px;width:102.4px;height:3.2px;background:#6e6e76;opacity:0.9;filter:blur(0.4px);"></div>
<div class="a" style="left:118.2px;top:613.2px;width:4.0px;height:4.0px;background:#3a5ab0;border-radius:50%;"></div>
<div class="a" style="left:124.7px;top:613.8px;width:138.0px;height:3.2px;background:#6e6e76;opacity:0.9;filter:blur(0.4px);"></div>
<div class="a" style="left:124.7px;top:622.6px;width:64.6px;height:3.2px;background:#6e6e76;opacity:0.9;filter:blur(0.4px);"></div>
<div class="a" style="left:118.2px;top:632.8px;width:4.0px;height:4.0px;background:#3a5ab0;border-radius:50%;"></div>
<div class="a" style="left:124.7px;top:633.4px;width:153.0px;height:3.2px;background:#6e6e76;opacity:0.9;filter:blur(0.4px);"></div>
<div class="a" style="left:118.2px;top:643.5px;width:4.0px;height:4.0px;background:#3a5ab0;border-radius:50%;"></div>
<div class="a" style="left:124.7px;top:644.1px;width:88.9px;height:3.2px;background:#6e6e76;opacity:0.9;filter:blur(0.4px);"></div>
<div class="a" style="left:245.7px;top:672.9px;width:27.0px;height:1.5px;background:#556;"></div>
<div class="a" style="left:80.7px;top:725.0px;width:200.3px;height:151.2px;background:#e8e8ec;box-shadow:0 0 0 1px #cfcfcf;"></div>
<div class="a" style="left:80.7px;top:725.0px;width:200.3px;height:5.0px;background:#1f3d7a;"></div>
<div class="a" style="left:111.7px;top:730.0px;width:169.3px;height:27.0px;background:#ffffff;"></div>
<div class="a" style="left:80.7px;top:756.0px;width:31.3px;height:120.2px;background:#1f3b74;"></div>
<div class="a" style="left:80.7px;top:725px;width:31.3px;height:31px;background:linear-gradient(180deg,#c84848 0%,#8a5a9a 18%,#dde4f0 40%,#bcc9e0 70%,#e8ecf4 100%);"></div>
<div class="a" style="left:86.7px;top:739.0px;width:4.0px;height:6.0px;background:#4a6ab8;"></div>
<div class="a" style="left:94.7px;top:739.0px;width:4.0px;height:6.0px;background:#4a6ab8;"></div>
<div class="a" style="left:102.7px;top:739.0px;width:4.0px;height:6.0px;background:#4a6ab8;"></div>
<div class="a" style="left:118.4px;top:738.0px;width:159.0px;height:3.6px;background:#2a2a2a;opacity:0.85;filter:blur(0.4px);"></div>
<div class="a" style="left:118.2px;top:757.8px;width:4.0px;height:4.0px;background:#3a5ab0;border-radius:50%;"></div>
<div class="a" style="left:124.7px;top:758.4px;width:89.9px;height:3.2px;background:#6e6e76;opacity:0.9;filter:blur(0.4px);"></div>
<div class="a" style="left:118.2px;top:770.0px;width:4.0px;height:4.0px;background:#3a5ab0;border-radius:50%;"></div>
<div class="a" style="left:124.7px;top:770.6px;width:149.6px;height:3.2px;background:#6e6e76;opacity:0.9;filter:blur(0.4px);"></div>
<div class="a" style="left:124.7px;top:779.7px;width:94.3px;height:3.2px;background:#6e6e76;opacity:0.9;filter:blur(0.4px);"></div>
<div class="a" style="left:118.2px;top:789.2px;width:4.0px;height:4.0px;background:#3a5ab0;border-radius:50%;"></div>
<div class="a" style="left:124.7px;top:789.8px;width:136.0px;height:3.2px;background:#6e6e76;opacity:0.9;filter:blur(0.4px);"></div>
<div class="a" style="left:124.7px;top:798.9px;width:132.7px;height:3.2px;background:#6e6e76;opacity:0.9;filter:blur(0.4px);"></div>
<div class="a" style="left:118.2px;top:808.8px;width:4.0px;height:4.0px;background:#3a5ab0;border-radius:50%;"></div>
<div class="a" style="left:124.7px;top:809.4px;width:56.8px;height:3.2px;background:#6e6e76;opacity:0.9;filter:blur(0.4px);"></div>
<div class="a" style="left:118.2px;top:820.6px;width:4.0px;height:4.0px;background:#3a5ab0;border-radius:50%;"></div>
<div class="a" style="left:124.7px;top:821.2px;width:154.0px;height:3.2px;background:#6e6e76;opacity:0.9;filter:blur(0.4px);"></div>
<div class="a" style="left:124.7px;top:830.3px;width:47.0px;height:3.2px;background:#6e6e76;opacity:0.9;filter:blur(0.4px);"></div>
<div class="a" style="left:118.2px;top:840.5px;width:4.0px;height:4.0px;background:#3a5ab0;border-radius:50%;"></div>
<div class="a" style="left:124.7px;top:841.1px;width:150.6px;height:3.2px;background:#6e6e76;opacity:0.9;filter:blur(0.4px);"></div>
<div class="a" style="left:124.7px;top:850.5px;width:59.5px;height:3.2px;background:#6e6e76;opacity:0.9;filter:blur(0.4px);"></div>
<div class="a" style="left:245.7px;top:872.2px;width:27.0px;height:1.5px;background:#556;"></div>
<div class="a" style="left:80.7px;top:925.0px;width:200.3px;height:151.2px;background:#e8e8ec;box-shadow:0 0 0 1px #cfcfcf;"></div>
<div class="a" style="left:80.7px;top:925.0px;width:200.3px;height:5.0px;background:#1f3d7a;"></div>
<div class="a" style="left:111.7px;top:930.0px;width:169.3px;height:27.0px;background:#ffffff;"></div>
<div class="a" style="left:80.7px;top:956.0px;width:31.3px;height:120.2px;background:#1f3b74;"></div>
<div class="a" style="left:80.7px;top:925px;width:31.3px;height:31px;background:linear-gradient(180deg,#c84848 0%,#8a5a9a 18%,#dde4f0 40%,#bcc9e0 70%,#e8ecf4 100%);"></div>
<div class="a" style="left:86.7px;top:939.0px;width:4.0px;height:6.0px;background:#4a6ab8;"></div>
<div class="a" style="left:94.7px;top:939.0px;width:4.0px;height:6.0px;background:#4a6ab8;"></div>
<div class="a" style="left:102.7px;top:939.0px;width:4.0px;height:6.0px;background:#4a6ab8;"></div>
<div class="a" style="left:129.2px;top:937.0px;width:137.0px;height:6.0px;background:#2d3f8a;opacity:0.85;filter:blur(0.6px);"></div>
<div class="a" style="left:129.2px;top:948.0px;width:31.0px;height:6.0px;background:#2d3f8a;opacity:0.85;filter:blur(0.6px);"></div>
<div class="a" style="left:85.7px;top:960.0px;width:186.0px;height:103.0px;background:#ffffff;"></div>
<div class="a" style="left:96.7px;top:965.0px;width:55.0px;height:4.0px;background:#b8c0d8;opacity:0.7;filter:blur(0.5px);"></div>
<div class="a" style="left:256.7px;top:965.0px;width:19.0px;height:5.5px;background:#333;opacity:0.8;filter:blur(0.4px);"></div>
<div class="a" style="left:95.7px;top:979.5px;width:165.0px;height:3.0px;background:#a8c4ec;"></div>
<div class="a" style="left:95.7px;top:982.5px;width:165.0px;height:80.0px;background:#eef1f8;"></div>
<div class="a" style="left:95.7px;top:988.0px;width:36.0px;height:1.6px;background:#5a5a66;opacity:0.6;"></div>
<div class="a" style="left:95.7px;top:992.0px;width:36.0px;height:1.6px;background:#5a5a66;opacity:0.6;"></div>
<div class="a" style="left:95.7px;top:996.0px;width:36.0px;height:1.6px;background:#5a5a66;opacity:0.6;"></div>
<div class="a" style="left:95.7px;top:1000.0px;width:36.0px;height:1.6px;background:#5a5a66;opacity:0.6;"></div>
<div class="a" style="left:95.7px;top:1005.0px;width:36.0px;height:1.6px;background:#5a5a66;opacity:0.6;"></div>
<div class="a" style="left:95.7px;top:1011.0px;width:36.0px;height:1.6px;background:#5a5a66;opacity:0.6;"></div>
<div class="a" style="left:95.7px;top:1015.0px;width:36.0px;height:1.6px;background:#5a5a66;opacity:0.6;"></div>
<div class="a" style="left:95.7px;top:1018.5px;width:36.0px;height:1.6px;background:#5a5a66;opacity:0.6;"></div>
<div class="a" style="left:95.7px;top:1024.0px;width:36.0px;height:1.6px;background:#5a5a66;opacity:0.6;"></div>
<div class="a" style="left:95.7px;top:1029.5px;width:36.0px;height:1.6px;background:#5a5a66;opacity:0.6;"></div>
<div class="a" style="left:95.7px;top:1034.0px;width:36.0px;height:1.6px;background:#5a5a66;opacity:0.6;"></div>
<div class="a" style="left:95.7px;top:1038.0px;width:36.0px;height:1.6px;background:#5a5a66;opacity:0.6;"></div>
<div class="a" style="left:95.7px;top:1041.5px;width:36.0px;height:1.6px;background:#5a5a66;opacity:0.6;"></div>
<div class="a" style="left:95.7px;top:1045.5px;width:36.0px;height:1.6px;background:#5a5a66;opacity:0.6;"></div>
<div class="a" style="left:95.7px;top:1049.0px;width:36.0px;height:1.6px;background:#5a5a66;opacity:0.6;"></div>
<div class="a" style="left:215.7px;top:986.0px;width:8.0px;height:1.5px;background:#5a5a66;opacity:0.5;"></div>
<div class="a" style="left:215.7px;top:990.0px;width:8.0px;height:1.5px;background:#5a5a66;opacity:0.5;"></div>
<div class="a" style="left:215.7px;top:994.0px;width:8.0px;height:1.5px;background:#5a5a66;opacity:0.5;"></div>
<div class="a" style="left:215.7px;top:998.0px;width:8.0px;height:1.5px;background:#5a5a66;opacity:0.5;"></div>
<div class="a" style="left:215.7px;top:1002.0px;width:8.0px;height:1.5px;background:#5a5a66;opacity:0.5;"></div>
<div class="a" style="left:215.7px;top:1007.0px;width:8.0px;height:1.5px;background:#5a5a66;opacity:0.5;"></div>
<div class="a" style="left:215.7px;top:1012.0px;width:8.0px;height:1.5px;background:#5a5a66;opacity:0.5;"></div>
<div class="a" style="left:165.7px;top:1012.0px;width:8.0px;height:1.5px;background:#5a5a66;opacity:0.5;"></div>
<div class="a" style="left:247.7px;top:1012.0px;width:8.0px;height:1.5px;background:#5a5a66;opacity:0.5;"></div>
<div class="a" style="left:215.7px;top:1016.0px;width:8.0px;height:1.5px;background:#5a5a66;opacity:0.5;"></div>
<div class="a" style="left:215.7px;top:1020.0px;width:8.0px;height:1.5px;background:#5a5a66;opacity:0.5;"></div>
<div class="a" style="left:215.7px;top:1025.0px;width:8.0px;height:1.5px;background:#5a5a66;opacity:0.5;"></div>
<div class="a" style="left:197.7px;top:1031.0px;width:8.0px;height:1.5px;background:#5a5a66;opacity:0.5;"></div>
<div class="a" style="left:247.7px;top:1031.0px;width:8.0px;height:1.5px;background:#5a5a66;opacity:0.5;"></div>
<div class="a" style="left:197.7px;top:1036.0px;width:8.0px;height:1.5px;background:#5a5a66;opacity:0.5;"></div>
<div class="a" style="left:247.7px;top:1036.0px;width:8.0px;height:1.5px;background:#5a5a66;opacity:0.5;"></div>
<div class="a" style="left:197.7px;top:1040.0px;width:8.0px;height:1.5px;background:#5a5a66;opacity:0.5;"></div>
<div class="a" style="left:247.7px;top:1040.0px;width:8.0px;height:1.5px;background:#5a5a66;opacity:0.5;"></div>
<div class="a" style="left:197.7px;top:1044.0px;width:8.0px;height:1.5px;background:#5a5a66;opacity:0.5;"></div>
<div class="a" style="left:247.7px;top:1044.0px;width:8.0px;height:1.5px;background:#5a5a66;opacity:0.5;"></div>
<div class="a" style="left:245.7px;top:1068.0px;width:28.0px;height:1.5px;background:#334;opacity:0.7;"></div>
<div class="a" style="left:79.7px;top:1124.0px;width:201.5px;height:151.6px;background:#ffffff;box-shadow:0 0 0 1px #cfcfcf;"></div>
<div class="a" style="left:82.7px;top:1129.0px;width:125.0px;height:15.0px;background:#d5d5d5;"></div>
<div class="a" style="left:82.7px;top:1129.0px;width:6.0px;height:15.0px;background:#d42a2a;border-radius:0 6px 6px 0;"></div>
<div class="a" style="left:91.7px;top:1131.0px;width:115.0px;height:2.8px;background:#333;"></div>
<div class="a" style="left:89.7px;top:1137.5px;width:115.0px;height:2.8px;background:#333;"></div>
<div class="a" style="left:84.7px;top:1146.5px;width:127.0px;height:1.6px;background:#e04848;"></div>
<div class="a" style="left:231.7px;top:1130.0px;width:34.0px;height:12.0px;background:#55575c;opacity:0.85;"></div>
<div class="a" style="left:267.7px;top:1129.0px;width:7.0px;height:11.0px;background:#d42a2a;border-radius:0 0 4px 4px;"></div>
<div class="a" style="left:231.7px;top:1143.0px;width:43.0px;height:1.5px;background:#e04848;"></div>
<div class="a" style="left:231.7px;top:1146.0px;width:43.0px;height:1.3px;background:#555;"></div>
<div class="a" style="left:107.7px;top:1153.0px;width:127.5px;height:2.6px;background:#4a4a4a;opacity:0.75;filter:blur(0.4px);"></div>
<div class="a" style="left:107.7px;top:1158.0px;width:79.9px;height:2.6px;background:#4a4a4a;opacity:0.75;filter:blur(0.4px);"></div>
<div class="a" style="left:107.7px;top:1170.0px;width:119.0px;height:2.6px;background:#4a4a4a;opacity:0.75;filter:blur(0.4px);"></div>
<div class="a" style="left:107.7px;top:1179.0px;width:76.5px;height:2.6px;background:#4a4a4a;opacity:0.75;filter:blur(0.4px);"></div>
<div class="a" style="left:107.7px;top:1184.0px;width:115.6px;height:2.6px;background:#4a4a4a;opacity:0.75;filter:blur(0.4px);"></div>
<div class="a" style="left:107.7px;top:1192.0px;width:30.6px;height:2.6px;background:#4a4a4a;opacity:0.75;filter:blur(0.4px);"></div>
<div class="a" style="left:107.7px;top:1198.0px;width:93.5px;height:2.6px;background:#4a4a4a;opacity:0.75;filter:blur(0.4px);"></div>
<div class="a" style="left:107.7px;top:1203.0px;width:73.1px;height:2.6px;background:#4a4a4a;opacity:0.75;filter:blur(0.4px);"></div>
<div class="a" style="left:107.7px;top:1210.0px;width:100.3px;height:2.6px;background:#4a4a4a;opacity:0.75;filter:blur(0.4px);"></div>
<div class="a" style="left:107.7px;top:1216.0px;width:108.8px;height:2.6px;background:#4a4a4a;opacity:0.75;filter:blur(0.4px);"></div>
<div class="a" style="left:107.7px;top:1221.0px;width:115.6px;height:2.6px;background:#4a4a4a;opacity:0.75;filter:blur(0.4px);"></div>
<div class="a" style="left:107.7px;top:1229.0px;width:119.0px;height:2.6px;background:#4a4a4a;opacity:0.75;filter:blur(0.4px);"></div>
<div class="a" style="left:107.7px;top:1236.0px;width:124.1px;height:2.6px;background:#4a4a4a;opacity:0.75;filter:blur(0.4px);"></div>
<div class="a" style="left:107.7px;top:1243.0px;width:40.8px;height:2.6px;background:#4a4a4a;opacity:0.75;filter:blur(0.4px);"></div>
<div class="a" style="left:107.7px;top:1250.0px;width:102.0px;height:2.6px;background:#4a4a4a;opacity:0.75;filter:blur(0.4px);"></div>
<div class="a" style="left:107.7px;top:1257.0px;width:61.2px;height:2.6px;background:#4a4a4a;opacity:0.75;filter:blur(0.4px);"></div>
<div class="a" style="left:85.7px;top:1154.0px;width:16.0px;height:11.0px;background:#a8a8b0;opacity:0.6;border-radius:3px;"></div>
<div class="a" style="left:85.7px;top:1176.0px;width:16.0px;height:11.0px;background:#a8a8b0;opacity:0.6;border-radius:3px;"></div>
<div class="a" style="left:85.7px;top:1192.0px;width:16.0px;height:11.0px;background:#a8a8b0;opacity:0.6;border-radius:3px;"></div>
<div class="a" style="left:85.7px;top:1214.0px;width:16.0px;height:11.0px;background:#a8a8b0;opacity:0.6;border-radius:3px;"></div>
<div class="a" style="left:85.7px;top:1234.0px;width:16.0px;height:11.0px;background:#a8a8b0;opacity:0.6;border-radius:3px;"></div>
<div class="a" style="left:85.7px;top:1252.0px;width:16.0px;height:11.0px;background:#a8a8b0;opacity:0.6;border-radius:3px;"></div>
<div class="a" style="left:85.7px;top:1271.6px;width:190.0px;height:1.6px;background:#9a9a9a;"></div>
<div class="a" style="left:73.0px;top:1317.0px;width:215.0px;height:164.5px;background:#7b1a1d;"></div>
<div class="a" style="left:80.5px;top:1324.0px;width:201.0px;height:151.0px;background:#ffffff;"></div>
<div class="a" style="left:84.3px;top:1326.7px;width:151.4px;height:12.8px;background:#cfcfcf;"></div>
<div class="a" style="left:84.3px;top:1326.7px;width:5.8px;height:12.8px;background:#cc2a27;border-radius:0 4px 4px 0;"></div>
<div class="a" style="left:93.0px;top:1328.0px;width:114.3px;height:4.2px;background:#222;opacity:0.8;"></div>
<div class="a" style="left:93.0px;top:1334.7px;width:36.2px;height:4.1px;background:#222;opacity:0.8;"></div>
<div class="a" style="left:84.3px;top:1340.4px;width:148.9px;height:1.7px;background:#c86060;"></div>
<div class="a" style="left:239.0px;top:1326.5px;width:30.3px;height:8.9px;background:#55575c;opacity:0.8;"></div>
<div class="a" style="left:270.6px;top:1326.5px;width:7.4px;height:8.9px;background:#d42a2a;opacity:0.8;"></div>
<div class="a" style="left:239.0px;top:1336.7px;width:39.0px;height:4.1px;background:#999;opacity:0.5;"></div>
<div class="a" style="left:86.5px;top:1346.1px;width:170.7px;height:3.5px;background:#c3282c;opacity:0.7;"></div>
<div class="a" style="left:85.0px;top:1353.0px;width:43.2px;height:28.1px;background:#8aa4b2;"></div>
<div class="a" style="left:134.1px;top:1354.3px;width:127.1px;height:3.6px;background:#222;opacity:0.55;"></div>
<div class="a" style="left:134.1px;top:1360.5px;width:88.9px;height:3.6px;background:#222;opacity:0.55;"></div>
<div class="a" style="left:135.7px;top:1369.0px;width:117.5px;height:3.6px;background:#222;opacity:0.55;"></div>
<div class="a" style="left:134.1px;top:1375.2px;width:109.3px;height:3.6px;background:#222;opacity:0.55;"></div>
<div class="a" style="left:84.3px;top:1382.1px;width:194.2px;height:0.6px;background:#8e1d22;"></div>
<div class="a" style="left:86.5px;top:1386.7px;width:132.6px;height:3.6px;background:#c3282c;opacity:0.7;"></div>
<div class="a" style="left:88.4px;top:1395.4px;width:97.7px;height:3.8px;background:#222;opacity:0.55;"></div>
<div class="a" style="left:83.8px;top:1400.9px;width:118.3px;height:0.6px;background:#a82228;"></div>
<div class="a" style="left:122.9px;top:1401.2px;width:1.0px;height:67.7px;background:#8e1d22;"></div>
<div class="a" style="left:162.3px;top:1401.2px;width:1.0px;height:67.7px;background:#8e1d22;"></div>
<div class="a" style="left:202.9px;top:1393.1px;width:1.0px;height:75.8px;background:#8e1d22;"></div>
<div class="a" style="left:240.0px;top:1392.8px;width:1.0px;height:76.1px;background:#8e1d22;"></div>
<div class="a" style="left:279.9px;top:1393.1px;width:1.0px;height:75.8px;background:#8e1d22;"></div>
<div class="a" style="left:86.8px;top:1402.7px;width:29.1px;height:2.9px;background:#222;opacity:0.45;"></div>
<div class="a" style="left:125.5px;top:1402.7px;width:31.1px;height:2.9px;background:#222;opacity:0.45;"></div>
<div class="a" style="left:86.8px;top:1408.0px;width:29.1px;height:2.9px;background:#222;opacity:0.45;"></div>
<div class="a" style="left:125.5px;top:1408.0px;width:31.1px;height:2.9px;background:#222;opacity:0.45;"></div>
<div class="a" style="left:86.8px;top:1413.4px;width:29.1px;height:2.9px;background:#222;opacity:0.45;"></div>
<div class="a" style="left:125.5px;top:1413.4px;width:31.1px;height:2.9px;background:#222;opacity:0.45;"></div>
<div class="a" style="left:86.8px;top:1418.7px;width:29.1px;height:2.9px;background:#222;opacity:0.45;"></div>
<div class="a" style="left:125.5px;top:1418.7px;width:31.1px;height:2.9px;background:#222;opacity:0.45;"></div>
<div class="a" style="left:86.8px;top:1424.0px;width:29.1px;height:2.9px;background:#222;opacity:0.45;"></div>
<div class="a" style="left:125.5px;top:1424.0px;width:31.1px;height:2.9px;background:#222;opacity:0.45;"></div>
<div class="a" style="left:86.8px;top:1429.4px;width:29.1px;height:2.9px;background:#222;opacity:0.45;"></div>
<div class="a" style="left:125.5px;top:1429.4px;width:31.1px;height:2.9px;background:#222;opacity:0.45;"></div>
<div class="a" style="left:86.8px;top:1434.7px;width:29.1px;height:2.9px;background:#222;opacity:0.45;"></div>
<div class="a" style="left:125.5px;top:1434.7px;width:31.1px;height:2.9px;background:#222;opacity:0.45;"></div>
<div class="a" style="left:165.2px;top:1408.1px;width:30.7px;height:2.9px;background:#222;opacity:0.45;"></div>
<div class="a" style="left:165.2px;top:1413.4px;width:30.7px;height:2.9px;background:#222;opacity:0.45;"></div>
<div class="a" style="left:165.2px;top:1418.7px;width:30.7px;height:2.9px;background:#222;opacity:0.45;"></div>
<div class="a" style="left:165.2px;top:1424.1px;width:30.7px;height:2.9px;background:#222;opacity:0.45;"></div>
<div class="a" style="left:210.5px;top:1403.4px;width:20.4px;height:3.2px;background:#222;opacity:0.45;"></div>
<div class="a" style="left:210.5px;top:1409.4px;width:20.4px;height:3.2px;background:#222;opacity:0.45;"></div>
<div class="a" style="left:210.5px;top:1415.5px;width:20.4px;height:3.2px;background:#222;opacity:0.45;"></div>
<div class="a" style="left:210.5px;top:1421.5px;width:20.4px;height:3.2px;background:#222;opacity:0.45;"></div>
<div class="a" style="left:210.5px;top:1427.6px;width:20.4px;height:3.2px;background:#222;opacity:0.45;"></div>
<div class="a" style="left:210.5px;top:1433.6px;width:20.4px;height:3.2px;background:#222;opacity:0.45;"></div>
<div class="a" style="left:249.8px;top:1407.8px;width:20.4px;height:3.2px;background:#222;opacity:0.45;"></div>
<div class="a" style="left:249.8px;top:1413.8px;width:20.4px;height:3.2px;background:#222;opacity:0.45;"></div>
<div class="a" style="left:249.8px;top:1419.8px;width:20.4px;height:3.2px;background:#222;opacity:0.45;"></div>
<div class="a" style="left:249.8px;top:1425.9px;width:20.4px;height:3.2px;background:#222;opacity:0.45;"></div>
<div class="a" style="left:84.1px;top:1439.9px;width:38.6px;height:27.9px;background:#5a5850;"></div>
<div class="a" style="left:123.3px;top:1439.9px;width:38.6px;height:28.7px;background:#6a90d8;"></div>
<div class="a" style="left:163.0px;top:1440.2px;width:39.2px;height:28.1px;background:#6a7a3a;"></div>
<div class="a" style="left:203.8px;top:1440.2px;width:35.5px;height:28.1px;background:#6a7a48;"></div>
<div class="a" style="left:241.8px;top:1440.2px;width:36.5px;height:27.2px;background:#d8c8a0;"></div>
<div class="a" style="left:86.0px;top:1471.9px;width:188.6px;height:0.7px;background:#808080;"></div>
<div class="a" style="left:80.3px;top:1523.4px;width:200.5px;height:90.0px;background:#ffffff;box-shadow:0 0 0 1px #cfcfcf;"></div>
<div class="a" style="left:104.0px;top:1544.5px;width:118.6px;height:3.6px;background:#4a4a7a;opacity:0.75;filter:blur(0.5px);"></div>
<div class="a" style="left:136.7px;top:1559.5px;width:91.3px;height:2.2px;background:#2f4a8a;"></div>
<div class="a" style="left:248.5px;top:1534px;width:21px;height:21px;border-radius:50%;background:radial-gradient(circle at 45% 40%,#3a8ae0,#1a4aa0);"></div>
<div class="a" style="left:252.5px;top:1538px;width:13px;height:13px;border-radius:50%;border:1.6px solid #ffffff;box-sizing:border-box;"></div>
<div class="a" style="left:151.7px;top:1570.6px;width:73.0px;height:2.4px;background:#6a70a0;opacity:0.7;filter:blur(0.4px);"></div>
<div class="a" style="left:151.7px;top:1576.5px;width:80.3px;height:2.4px;background:#6a70a0;opacity:0.7;filter:blur(0.4px);"></div>
<div class="a" style="left:151.7px;top:1582.4px;width:18.8px;height:2.4px;background:#6a70a0;opacity:0.7;filter:blur(0.4px);"></div>
<div class="a" style="left:151.7px;top:1588.8px;width:67.1px;height:2.4px;background:#6a70a0;opacity:0.7;filter:blur(0.4px);"></div>
<div class="a" style="left:151.7px;top:1594.8px;width:86.3px;height:2.4px;background:#6a70a0;opacity:0.7;filter:blur(0.4px);"></div>
<div class="a" style="left:151.7px;top:1600.6px;width:87.5px;height:2.4px;background:#6a70a0;opacity:0.7;filter:blur(0.4px);"></div>
<div class="a" style="left:0.0px;top:1606.0px;width:369.0px;height:2.0px;background:#e6e6e6;"></div>
<div class="a" style="left:917.0px;top:494.5px;width:1381.0px;height:1034.0px;background:#ffffff;box-shadow:0 0 0 1px #d0d0d0;"></div>
<div class="a" style="left:943.0px;top:513.0px;width:1040.0px;height:88.0px;background:#cfcfcf;"></div>
<div class="a" style="left:943.0px;top:513.0px;width:42.0px;height:88.0px;background:#cc2a27;border-radius:0 42px 42px 0 / 0 44px 44px 0;"></div>
<div class="a" style="left:943.0px;top:513.0px;width:12.0px;height:88.0px;background:#cc2a27;"></div>
<span class="a t" style="left:1003.0px;transform:scaleX(0.9568);transform-origin:0 50%;top:517.1px;font-size:40px;color:#000;font-weight:700;">ОСНОВНЕ ТА ДОДАТКОВЕ ПОКРИТТЯ ЗА</span>
<span class="a t" style="left:1003.0px;transform:scaleX(0.9510);transform-origin:0 50%;top:562.6px;font-size:40px;color:#000;font-weight:700;">ДОГОВОРОМ</span>
<div class="a" style="left:943.0px;top:607.5px;width:1008.0px;height:4.5px;background:linear-gradient(90deg,#d54040,#ec6a6a);"></div>
<div class="a" style="left:943.0px;top:612.5px;width:1023.0px;height:6.5px;background:#8a8a8a;"></div>
<span class="a t" style="left:2006.7px;transform:scaleX(0.7147);transform-origin:0 50%;top:490.4px;font-size:98px;color:#55575c;font-weight:700;">княжа</span>
<svg class="a" style="left:2223.0px;top:512.0px;" width="51" height="61" viewBox="0 0 51 61"><path d="M2.5 2.5 H48.5 V22 C48.5 42 38 54 25.5 58.5 C13 54 2.5 42 2.5 22 Z" fill="#fff" stroke="#d42a2a" stroke-width="5"/><path d="M6 8 C12 14 18 24 25.5 44 C33 24 39 14 45 8 C40 10 34 14 30 18 L25.5 12 L21 18 C17 14 11 10 6 8Z" fill="#d42a2a"/><path d="M25.5 17 L29 22 L25.5 30 L22 22Z" fill="#fff"/></svg>
<div class="a" style="left:2006.7px;top:582.4px;width:267.3px;height:4.4px;background:#cf2e36;"></div>
<span class="a t" style="left:2007.0px;transform:scaleX(1.0376);transform-origin:0 50%;top:594.3px;font-size:18.5px;color:#2e2e30;font-weight:700;">VIENNA INSURANCE GROUP</span>
<span class="a t" style="left:958.0px;transform:scaleX(1.0271);transform-origin:0 50%;top:641.6px;font-size:33.5px;color:#c3282c;font-weight:700;">ОСНОВНЕ – ОБОВ’ЯЗКОВЕ  СТРАХОВЕ ПОКРИТТЯ ЗА ДОГОВОРОМ:</span>
<svg class="a" style="left:947.6px;top:694.0px;" width="297.4" height="193" viewBox="0 0 297.4 193"><defs><filter id="fg" x="-5%" y="-5%" width="110%" height="110%"><feGaussianBlur stdDeviation="1.0"/></filter><clipPath id="fgc"><rect width="297.4" height="193"/></clipPath></defs><g clip-path="url(#fgc)"><g filter="url(#fg)">
<defs>
<linearGradient id="gbg" x1="0" y1="0" x2="0.5" y2="1"><stop offset="0" stop-color="#c6d6de"/><stop offset="0.5" stop-color="#abc2cc"/><stop offset="1" stop-color="#9db5c0"/></linearGradient>
<radialGradient id="glb" cx="0.6" cy="0.45" r="0.65"><stop offset="0" stop-color="#e2ecf2"/><stop offset="0.6" stop-color="#c8d8e2"/><stop offset="0.85" stop-color="#9fb4c6"/><stop offset="1" stop-color="#6f88a4"/></radialGradient>
<linearGradient id="cp" x1="0" y1="0" x2="1" y2="0"><stop offset="0" stop-color="#6e6a62"/><stop offset="0.45" stop-color="#cfcabe"/><stop offset="1" stop-color="#5e5a52"/></linearGradient>
</defs>
<rect x="-5" y="-5" width="307.4" height="203" fill="url(#gbg)"/>
<path d="M0 30 C60 20 120 50 170 40 M120 150 C190 160 250 140 302.4 165" stroke="#c4d4dc" stroke-width="16" fill="none" opacity="0.5"/>
<path d="M98 58 C125 40 160 28 200 26 C245 25 286 34 293 58 C298 76 286 88 264 92" fill="none" stroke="#2a353d" stroke-width="10"/>
<path d="M5 122 C2 100 18 86 40 84 M150 86 C172 92 186 104 190 122 C192 140 182 152 170 160" fill="none" stroke="#7e8a90" stroke-width="5"/>
<path d="M32 82 L48 90 M146 84 L160 94" stroke="#2a2f34" stroke-width="8"/>
<path d="M6 126 C16 148 36 162 64 168" fill="none" stroke="#dfe3e4" stroke-width="5"/>
<path d="M132 166 C152 160 170 150 186 134" fill="none" stroke="#dfe3e4" stroke-width="5"/>
<path d="M26 150 C42 160 54 165 66 168 M130 168 C148 162 162 156 174 148" stroke="#30302e" stroke-width="3.5" fill="none"/>
<ellipse cx="230" cy="136" rx="38" ry="15" fill="#2c2c2e"/>
<ellipse cx="230" cy="132" rx="33" ry="11" fill="#a29d92"/>
<rect x="212" y="100" width="36" height="34" fill="url(#cp)"/>
<ellipse cx="229" cy="92" rx="30" ry="11" fill="#2b3034"/>
<ellipse cx="229" cy="90" rx="21" ry="6.5" fill="#cdcbc4"/>
<circle cx="94" cy="110" r="52" fill="url(#glb)"/>
<path d="M48 95 C44 115 50 140 66 154 C58 130 56 110 62 92Z" fill="#46607e" opacity="0.8"/>
<path d="M66 66 C74 58 90 58 100 64 C96 70 88 68 84 74 C90 78 98 76 102 82 C94 88 84 86 76 90 C70 86 64 78 66 66Z" fill="#2e4866"/>
<path d="M64 92 C80 90 100 92 122 96 L124 102 C106 100 86 98 66 100Z" fill="#2e4866"/>
<path d="M62 104 C66 118 70 132 80 144 C86 152 96 156 100 150 C104 140 100 126 104 116 C108 108 100 104 94 104Z" fill="#d6e2ea" stroke="#3e5876" stroke-width="3"/>
<path d="M112 100 C124 104 136 112 138 124 C130 132 122 140 116 150" fill="none" stroke="#4a6684" stroke-width="4"/>
<path d="M66 152 C80 164 104 166 120 156" stroke="#5a7490" stroke-width="5" fill="none"/>
<path d="M74 162 C80 156 92 156 98 164 C104 156 116 156 122 162 C126 172 122 182 110 184 C102 184 99 180 98 176 C96 182 90 186 80 184 C70 182 70 170 74 162Z" fill="#1e1c1e"/>
<rect x="-5" y="-5" width="307.4" height="203" fill="none" stroke="#ffffff" stroke-width="8" opacity="0.55"/>
</g></g></svg>
<span class="a t" style="left:1285.0px;transform:scaleX(1.0004);transform-origin:0 50%;top:698.8px;font-size:34.5px;color:#000;font-weight:700;">Страхування медичних витрат за опцією медичної</span>
<span class="a t" style="left:1285.0px;transform:scaleX(0.9967);transform-origin:0 50%;top:740.8px;font-size:34.5px;color:#000;font-weight:700;">допомоги – програма  <span style="color:#c3282c">«А»</span> або <span style="color:#c3282c">«А+»</span></span>
<span class="a t" style="left:1295.7px;transform:scaleX(0.9972);transform-origin:0 50%;top:799.8px;font-size:34.5px;color:#000;font-weight:700;font-style:italic;">або, в окремих випадках за погодженням з ГО,</span>
<span class="a t" style="left:1285.0px;transform:scaleX(0.9991);transform-origin:0 50%;top:841.8px;font-size:34.5px;color:#000;font-weight:700;font-style:italic;">програма «Е» (експрес медична допомога).</span>
<div class="a" style="left:943.0px;top:894.5px;width:1334.0px;height:3.0px;background:#7c2226;"></div>
<span class="a t" style="left:958.0px;transform:scaleX(1.0284);transform-origin:0 50%;top:921.1px;font-size:33.5px;color:#c3282c;font-weight:700;">ДОДАТКОВЕ СТРАХОВЕ ПОКРИТТЯ ЗА ДОГОВОРОМ:</span>
<span class="a t" style="left:971.0px;transform:scaleX(0.9816);transform-origin:0 50%;top:980.9px;font-size:35px;color:#000;font-weight:700;">Страхування інших витрат  за опціями:</span>
<div class="a" style="left:940.0px;top:1023.0px;width:813.0px;height:3.2px;background:#a82228;"></div>
<div class="a" style="left:1208.5px;top:1025.0px;width:2.0px;height:465.0px;background:#7c2226;"></div>
<div class="a" style="left:1478.8px;top:1025.0px;width:2.0px;height:465.0px;background:#7c2226;"></div>
<div class="a" style="left:1757.8px;top:969.0px;width:2.0px;height:521.0px;background:#7c2226;"></div>
<div class="a" style="left:2012.8px;top:967.0px;width:2.0px;height:523.0px;background:#7c2226;"></div>
<div class="a" style="left:2287.2px;top:969.0px;width:2.0px;height:521.0px;background:#7c2226;"></div>
<span class="a t" style="left:959.5px;transform:scaleX(1.0520);transform-origin:0 50%;top:1030.9px;font-size:28.5px;color:#000;font-weight:700;font-style:italic;">Опція</span>
<span class="a t" style="left:1226.0px;transform:scaleX(1.0676);transform-origin:0 50%;top:1030.9px;font-size:28.5px;color:#000;font-weight:700;font-style:italic;">Опція для</span>
<span class="a t" style="left:959.5px;transform:scaleX(1.0668);transform-origin:0 50%;top:1067.6px;font-size:28.5px;color:#000;font-weight:700;font-style:italic;">адміністра-</span>
<span class="a t" style="left:1226.0px;transform:scaleX(1.0628);transform-origin:0 50%;top:1067.6px;font-size:28.5px;color:#000;font-weight:700;font-style:italic;">спортсменів</span>
<span class="a t" style="left:959.5px;transform:scaleX(1.0594);transform-origin:0 50%;top:1104.9px;font-size:28.5px;color:#000;font-weight:700;font-style:italic;">тивної</span>
<span class="a t" style="left:1226.0px;transform:scaleX(1.0655);transform-origin:0 50%;top:1104.9px;font-size:28.5px;color:#000;font-weight:700;font-style:italic;">та активного</span>
<span class="a t" style="left:959.5px;transform:scaleX(1.0611);transform-origin:0 50%;top:1141.4px;font-size:28.5px;color:#000;font-weight:700;font-style:italic;">допомоги та</span>
<span class="a t" style="left:1226.0px;transform:scaleX(1.0615);transform-origin:0 50%;top:1141.4px;font-size:28.5px;color:#000;font-weight:700;font-style:italic;">відпочинку –</span>
<span class="a t" style="left:959.5px;transform:scaleX(1.0565);transform-origin:0 50%;top:1178.3px;font-size:28.5px;color:#000;font-weight:700;font-style:italic;">страхування</span>
<span class="a t" style="left:1226.0px;transform:scaleX(1.0578);transform-origin:0 50%;top:1178.3px;font-size:28.5px;color:#000;font-weight:700;font-style:italic;">програма</span>
<span class="a t" style="left:959.5px;transform:scaleX(1.0524);transform-origin:0 50%;top:1215.5px;font-size:28.5px;color:#000;font-weight:700;font-style:italic;">багажу -</span>
<span class="a t" style="left:1226.0px;transform:scaleX(1.0630);transform-origin:0 50%;top:1215.5px;font-size:28.5px;color:#000;font-weight:700;font-style:italic;">«SPORT LIFE –</span>
<span class="a t" style="left:959.5px;transform:scaleX(1.0603);transform-origin:0 50%;top:1251.4px;font-size:28.5px;color:#000;font-weight:700;font-style:italic;">програма <span style="color:#c3282c">«В»</span></span>
<span class="a t" style="left:1226.0px;transform:scaleX(1.0588);transform-origin:0 50%;top:1251.4px;font-size:28.5px;color:#000;font-weight:700;font-style:italic;">програма <span style="color:#c3282c">«С»</span></span>
<span class="a t" style="left:1498.6px;transform:scaleX(1.0544);transform-origin:0 50%;top:1067.6px;font-size:28.5px;color:#000;font-weight:700;font-style:italic;">Опція</span>
<span class="a t" style="left:1498.6px;transform:scaleX(1.0575);transform-origin:0 50%;top:1104.9px;font-size:28.5px;color:#000;font-weight:700;font-style:italic;">страхування</span>
<span class="a t" style="left:1498.6px;transform:scaleX(1.0614);transform-origin:0 50%;top:1141.4px;font-size:28.5px;color:#000;font-weight:700;font-style:italic;">нездійснення</span>
<span class="a t" style="left:1498.6px;transform:scaleX(1.0625);transform-origin:0 50%;top:1178.3px;font-size:28.5px;color:#000;font-weight:700;font-style:italic;">подорожі - <span style="color:#c3282c">«N»</span></span>
<span class="a t" style="left:1831.7px;transform:scaleX(0.9806);transform-origin:50% 50%;top:1032.8px;font-size:34.5px;color:#000;font-weight:700;">Опція</span>
<span class="a t" style="left:1772.6px;transform:scaleX(0.9867);transform-origin:50% 50%;top:1074.4px;font-size:34.5px;color:#000;font-weight:700;">страхування</span>
<span class="a t" style="left:1854.6px;transform:scaleX(0.9582);transform-origin:50% 50%;top:1116.3px;font-size:34.5px;color:#000;font-weight:700;">від</span>
<span class="a t" style="left:1788.6px;transform:scaleX(0.9900);transform-origin:50% 50%;top:1157.3px;font-size:34.5px;color:#000;font-weight:700;">нещасного</span>
<span class="a t" style="left:1810.6px;transform:scaleX(0.9787);transform-origin:50% 50%;top:1198.3px;font-size:34.5px;color:#000;font-weight:700;">випадку</span>
<span class="a t" style="left:1844.6px;transform:scaleX(0.9724);transform-origin:50% 50%;top:1238.8px;font-size:34.5px;color:#c3282c;font-weight:700;">(НВ)</span>
<span class="a t" style="left:2100.7px;transform:scaleX(0.9806);transform-origin:50% 50%;top:1062.5px;font-size:34.5px;color:#000;font-weight:700;">Опція</span>
<span class="a t" style="left:2041.6px;transform:scaleX(0.9867);transform-origin:50% 50%;top:1104.2px;font-size:34.5px;color:#000;font-weight:700;">страхування</span>
<span class="a t" style="left:2097.2px;transform:scaleX(0.9763);transform-origin:50% 50%;top:1145.8px;font-size:34.5px;color:#000;font-weight:700;">майна</span>
<span class="a t" style="left:2082.8px;transform:scaleX(0.9855);transform-origin:50% 50%;top:1186.8px;font-size:34.5px;color:#c3282c;font-weight:700;">(Майно)</span>
<svg class="a" style="left:1921.0px;top:1187.0px;" width="16" height="42" viewBox="0 0 16 42"><path d="M1 1 H15 M8 1 V41 M1 41 H15" stroke="#111" stroke-width="2.2"/></svg>
<svg class="a" style="left:941.7px;top:1291.4px;" width="265.3" height="191.6" viewBox="0 0 265.3 191.6"><defs><filter id="fl" x="-5%" y="-5%" width="110%" height="110%"><feGaussianBlur stdDeviation="0.8"/></filter><clipPath id="flc"><rect width="265.3" height="191.6"/></clipPath></defs><g clip-path="url(#flc)"><g filter="url(#fl)">
<defs><linearGradient id="lfl" x1="0" y1="0" x2="0.3" y2="1"><stop offset="0" stop-color="#888582"/><stop offset="1" stop-color="#aeaaa5"/></linearGradient>
<linearGradient id="lcl" x1="0" y1="0" x2="0" y2="1"><stop offset="0" stop-color="#3d3a34"/><stop offset="1" stop-color="#7a776e"/></linearGradient></defs>
<rect x="-4" y="-4" width="273.3" height="199.6" fill="#b9b6b0"/>
<rect x="-4" y="-4" width="273.3" height="20" fill="url(#lcl)"/>
<rect x="0" y="14" width="265.3" height="54" fill="#d2d2d0"/>
<rect x="0" y="16" width="120" height="50" fill="#eeeeec"/>
<rect x="127" y="18" width="60" height="45" fill="#5a6678"/>
<rect x="190" y="30" width="75.30000000000001" height="35" fill="#a3a9b1"/>
<rect x="215" y="35" width="50" height="25" fill="#c8ccd2"/>
<rect x="35" y="10" width="10" height="62" fill="#f6f6f4"/><rect x="68" y="12" width="10" height="60" fill="#f2f2f0"/><rect x="115" y="14" width="10" height="58" fill="#eaeaea"/>
<rect x="22" y="38" width="13" height="14" fill="#c4322e"/><rect x="46" y="35" width="22" height="10" fill="#c83a34"/>
<rect x="80" y="40" width="20" height="10" fill="#7a8aa0"/>
<rect x="174" y="0" width="41" height="6" fill="#f8f8f8"/><rect x="235" y="16" width="30" height="7" fill="#f4f4f4"/>
<rect x="0" y="66" width="265.3" height="16" fill="#d8b232"/>
<rect x="0" y="66" width="150" height="6" fill="#e6c860"/>
<rect x="0" y="82" width="265.3" height="22" fill="#3c3b39"/>
<rect x="20" y="82" width="8" height="20" fill="#6a6a68"/><rect x="70" y="82" width="8" height="20" fill="#6a6a68"/>
<rect x="0" y="99" width="265.3" height="92.6" fill="url(#lfl)"/>
<rect x="-4" y="0" width="7" height="191.6" fill="#2a2826"/>
<rect x="148" y="14" width="7" height="88" fill="#e8e8e8"/><rect x="182" y="30" width="7" height="72" fill="#dedede"/>
<rect x="146" y="14" width="44" height="14" fill="#2f3440"/>
<circle cx="210" cy="71" r="7" fill="#1e1e20"/>
<path d="M114 106 C116 100 122 98 130 98 L180 96 C200 90 230 95 265.3 98 L265.3 191.6 L114 191.6 Z" fill="#1d1d20"/>
<path d="M140 112 C180 108 220 112 265.3 116 M142 135 C190 132 230 136 265.3 140" stroke="#333338" stroke-width="2.5" fill="none"/>
<rect x="128" y="118" width="6" height="45" fill="#4a4a4e"/>
<path d="M188 84 L198 82 C215 88 232 96 246 104 L243 128 C230 124 215 120 204 116 C200 106 195 96 188 84Z" fill="#eceae6"/>
<path d="M190 95 L180 125" stroke="#e8b0d0" stroke-width="2.5"/>
<path d="M157 128 L183 122 L188 170 L163 176 Z" fill="#e06aa6"/>
</g></g></svg>
<svg class="a" style="left:1211.5px;top:1291.0px;" width="264.2" height="196.8" viewBox="0 0 264.2 196.8"><defs><filter id="fs" x="-5%" y="-5%" width="110%" height="110%"><feGaussianBlur stdDeviation="0.8"/></filter><clipPath id="fsc"><rect width="264.2" height="196.8"/></clipPath></defs><g clip-path="url(#fsc)"><g filter="url(#fs)">
<defs><linearGradient id="sky" x1="0" y1="0" x2="0" y2="1"><stop offset="0" stop-color="#4677cb"/><stop offset="1" stop-color="#5b89d6"/></linearGradient>
<linearGradient id="snw" x1="0" y1="0" x2="0" y2="1"><stop offset="0" stop-color="#e4e7ee"/><stop offset="1" stop-color="#d4d8e2"/></linearGradient></defs>
<rect x="-4" y="-4" width="272.2" height="204.8" fill="url(#sky)"/>
<path d="M-4 146 C60 148 150 152 268.2 162 L268.2 200.8 L-4 200.8 Z" fill="url(#snw)"/>
<path d="M0 170 C60 168 120 172 160 176" stroke="#c4cad6" stroke-width="2" fill="none"/>
<path d="M120 50 C105 54 100 62 99 75 C98 88 100 98 101 104 C100 120 104 140 106 154 L126 156 L128 128 C130 140 134 150 136 158 L148 156 C146 140 144 120 142 104 C150 98 160 104 162 112 L166 108 C162 92 156 76 150 64 C144 56 134 52 130 52Z" fill="#f3f3f2"/>
<path d="M99 75 C96 86 97 98 102 106" stroke="#e2e2e4" stroke-width="9" fill="none"/>
<path d="M120 30 C112 34 112 46 118 52 C126 56 140 54 144 44 C146 36 140 28 130 28 C126 28 122 29 120 30Z" fill="#d6a890"/>
<path d="M116 28 C120 20 138 20 146 30 C142 36 132 34 124 38 C122 46 124 52 120 54 C114 50 112 40 116 28Z" fill="#1e1a1a"/>
<path d="M96 154 L128 154 L130 164 L98 164Z" fill="#242428"/>
<path d="M62 172 L180 178 L184 182 L62 176Z" fill="#606468"/>
<path d="M103 104 L118 176" stroke="#1a1a24" stroke-width="2"/>
<path d="M170 60 C164 62 162 70 166 76 C170 80 178 78 180 72 C182 64 176 58 170 60Z" fill="#b8886a"/>
<path d="M166 62 C168 54 182 56 182 66 L166 66Z" fill="#201818"/>
<path d="M160 78 C170 72 186 74 192 84 C196 94 196 104 194 110 L168 110 C164 100 160 90 160 78Z" fill="#2a2a50"/>
<path d="M164 86 L176 92 L172 100 L162 96Z" fill="#a02a44"/>
<path d="M190 90 C196 100 200 112 198 122" stroke="#3a2a48" stroke-width="6" fill="none"/>
<circle cx="198" cy="122" r="4" fill="#c03040"/>
<path d="M150 108 L168 108 C172 125 168 140 160 152 L146 156 C152 140 154 124 150 108Z" fill="#e4e4e8"/>
<path d="M132 160 L205 164 L203 168 L132 166Z" fill="#505458"/>
</g></g></svg>
<svg class="a" style="left:1483.6px;top:1293.0px;" width="269.9" height="193" viewBox="0 0 269.9 193"><defs><filter id="fe" x="-5%" y="-5%" width="110%" height="110%"><feGaussianBlur stdDeviation="0.9"/></filter><clipPath id="fec"><rect width="269.9" height="193"/></clipPath></defs><g clip-path="url(#fec)"><g filter="url(#fe)">
<rect x="-4" y="-4" width="277.9" height="201" fill="#6f8a40"/>
<rect x="60" y="-4" width="90" height="60" fill="#b4c27a"/>
<rect x="150" y="-4" width="123.89999999999998" height="90" fill="#4e7a2c"/>
<rect x="170" y="80" width="60" height="40" fill="#a2bc62"/>
<rect x="230" y="70" width="43.89999999999998" height="60" fill="#8aaa50"/>
<path d="M-4 -4 H64 C62 40 60 100 56 197 H-4Z" fill="#5e5646"/>
<path d="M10 -4 V193 M30 -4 V193" stroke="#4a4436" stroke-width="5" opacity="0.6"/>
<path d="M134 -4 H150 C146 20 142 40 136 50 L128 50 C130 30 132 15 134 -4Z" fill="#4a4034"/>
<path d="M60 160 C120 165 200 175 273.9 170 V197 H40Z" fill="#6e6a5c"/>
<path d="M103 20 C100 10 110 8 118 8 C128 8 136 12 134 26 C134 40 128 50 118 52 C108 52 102 40 103 20Z" fill="#d8b894"/>
<path d="M100 22 C100 10 112 6 120 6 C130 6 138 12 136 24 C130 14 110 14 100 22Z" fill="#c8b07a"/>
<path d="M82 56 C95 48 140 46 158 56 L162 100 C150 108 130 110 110 108 L86 100 Z" fill="#5a1e24"/>
<path d="M90 68 H140 M92 76 H138 M94 84 H134" stroke="#c8b0b0" stroke-width="2.5" opacity="0.7"/>
<path d="M158 60 C168 80 172 100 176 120" stroke="#d0aa88" stroke-width="7" fill="none"/>
<path d="M100 112 C130 104 170 110 200 120 C230 130 245 150 255 175 L240 197 L100 197 C96 160 96 130 100 112Z" fill="#a8bed4"/>
<path d="M220 140 C240 150 262 170 273.9 190 V197 H230Z" fill="#2a2a30"/>
<path d="M20 82 C40 72 60 80 75 92 L132 150 C138 160 132 175 118 178 C100 180 92 170 80 158 L22 100 C14 94 14 86 20 82Z" fill="#eeeee4"/>
<circle cx="118" cy="148" r="26" fill="#f2f2ea"/>
<path d="M18 60 C26 50 44 54 52 64 L50 78 C40 84 24 82 18 74 C14 68 14 64 18 60Z" fill="#d4ae8e"/>
<path d="M212 78 C214 66 226 62 232 72 C236 60 246 58 248 70 C252 90 250 120 244 150 C238 170 222 176 212 166 C206 150 208 110 212 78Z" fill="#c49c7a"/>
<path d="M6 108 L54 118 M10 118 L20 193 M40 124 L50 193" stroke="#b8bcc0" stroke-width="4" fill="none"/>
</g></g></svg>
<svg class="a" style="left:1763.6px;top:1293.0px;" width="244.4" height="193" viewBox="0 0 244.4 193"><defs><filter id="fd" x="-5%" y="-5%" width="110%" height="110%"><feGaussianBlur stdDeviation="0.9"/></filter><clipPath id="fdc"><rect width="244.4" height="193"/></clipPath></defs><g clip-path="url(#fdc)"><g filter="url(#fd)">
<defs><linearGradient id="dgr" x1="0" y1="0" x2="0" y2="1"><stop offset="0" stop-color="#232b1c"/><stop offset="0.18" stop-color="#3e5030"/><stop offset="0.4" stop-color="#6a6e48"/><stop offset="0.56" stop-color="#8a8860"/><stop offset="0.62" stop-color="#7a9a4a"/><stop offset="1" stop-color="#6e9e42"/></linearGradient></defs>
<rect x="-4" y="-4" width="252.4" height="201" fill="url(#dgr)"/>
<rect x="72" y="-4" width="8" height="28" fill="#e8e8e0"/><rect x="88" y="24" width="8" height="16" fill="#d8d8d0"/>
<path d="M-4 30 C40 26 80 40 130 30 L160 40 L150 90 L-4 100Z" fill="#3c5a2c" opacity="0.6"/>
<path d="M150 100 C180 96 220 100 244.4 104 V150 L150 150Z" fill="#2c3424" opacity="0.7"/>
<path d="M60 178 C100 168 150 172 180 185 L180 197 L40 197Z" fill="#3f6a2a" opacity="0.55"/>
<path d="M10 146 C30 138 50 126 68 118 C90 108 110 100 130 86 C140 78 150 66 158 60 C164 56 168 62 166 70 C164 80 156 90 150 100 C146 112 146 124 152 136 L160 150 L152 154 L140 132 C130 124 120 122 110 126 C90 134 70 140 50 146 L22 156 Z" fill="#b36c38"/>
<path d="M130 110 C140 120 150 126 162 148 L156 152 C148 136 136 126 128 118Z" fill="#c07a44"/>
<path d="M10 146 L28 152 L24 160 L8 156Z" fill="#f0ece6"/>
<path d="M148 80 L160 96 L152 100Z" fill="#f0ece6"/>
<path d="M156 56 C170 46 190 40 200 60 C196 74 180 80 164 76Z" fill="#1e1e1e"/>
<path d="M170 30 C182 10 200 6 212 20 C206 36 192 50 176 54Z" fill="#3c4044"/>
<path d="M186 -4 H225 C232 30 234 60 232 84 L192 84 C194 60 190 30 186 -4Z" fill="#dcdcd8"/>
<path d="M196 76 L234 80 L232 120 C228 150 220 175 216 197 L194 197 L190 160 L170 197 L148 197 C160 160 178 130 190 100Z" fill="#7a9ac0"/>
<rect x="232" y="-4" width="16" height="150" fill="#3a3c38"/>
</g></g></svg>
<svg class="a" style="left:2024.7px;top:1293.0px;" width="250.9" height="187" viewBox="0 0 250.9 187"><defs><filter id="fh" x="-5%" y="-5%" width="110%" height="110%"><feGaussianBlur stdDeviation="0.7"/></filter><clipPath id="fhc"><rect width="250.9" height="187"/></clipPath></defs><g clip-path="url(#fhc)"><g filter="url(#fh)">
<defs><linearGradient id="fir" x1="0" y1="0" x2="0" y2="1"><stop offset="0" stop-color="#e04a22"/><stop offset="0.45" stop-color="#f08a24"/><stop offset="0.8" stop-color="#f8c830"/><stop offset="1" stop-color="#f4d050"/></linearGradient>
<radialGradient id="hbg" cx="0.5" cy="0.55" r="0.8"><stop offset="0.65" stop-color="#ffffff"/><stop offset="1" stop-color="#e0e0e0"/></radialGradient></defs>
<rect x="-4" y="-4" width="258.9" height="195" fill="url(#hbg)"/>
<path d="M48 72 L52 50 L58 62 L62 36 L70 52 L76 22 L84 44 L92 16 L98 36 L106 12 L114 34 L122 14 L130 36 L138 18 L146 40 L156 24 L162 46 L172 30 L176 54 L186 40 L190 62 L198 52 L206 78 L200 82 L52 82Z" fill="url(#fir)"/>
<path d="M80 50 L90 30 L96 54 M116 46 L124 24 L130 48 M150 50 L158 34 L164 56" stroke="#d03a18" stroke-width="3" fill="none" opacity="0.7"/>
<path d="M-4 148 C0 128 40 118 90 120 C150 118 210 118 250 128 C252 140 240 150 230 152 C210 156 200 165 215 168 C200 178 150 178 100 176 C70 176 40 172 35 164 C20 160 -4 160 -4 148Z" fill="#72b04e"/>
<path d="M196 98 C210 92 232 100 248 116 L246 128 L198 126Z" fill="#4e9a3a"/>
<path d="M36 114 C38 102 50 98 56 110 L54 126 L36 126Z" fill="#5aa040"/>
<path d="M46 72 L196 74 L206 88 L196 92 L58 94 L46 86Z" fill="#b52a1c"/>
<rect x="50" y="90" width="156" height="46" fill="#f0f0f0"/>
<rect x="158" y="88" width="40" height="46" fill="#d4d4d8"/>
<rect x="162" y="96" width="24" height="38" fill="#a8a8b0"/>
<rect x="80" y="104" width="20" height="12" fill="#7a8a9a"/><rect x="110" y="104" width="20" height="12" fill="#7a8a9a"/>
<rect x="140" y="96" width="10" height="16" fill="#8a9aaa"/>
<path d="M22 124 H60 M22 132 H60 M64 146 H92 M64 154 H92 M104 150 H134 M104 157 H134 M136 138 H162 M136 146 H162" stroke="#ffffff" stroke-width="4"/>
<path d="M24 122 V140 M32 122 V140 M40 122 V140 M48 122 V140 M56 122 V140 M66 142 V160 M74 142 V160 M82 142 V160 M90 142 V160 M106 146 V162 M114 146 V162 M122 146 V162 M130 146 V162 M138 134 V152 M146 134 V152 M154 134 V152" stroke="#f4f4f4" stroke-width="3"/>
<circle cx="84" cy="130" r="3" fill="#f8e8a0"/><circle cx="110" cy="136" r="3" fill="#f8e8a0"/><circle cx="130" cy="128" r="3" fill="#f8f0c0"/>
</g></g></svg>
<div class="a" style="left:955.0px;top:1511.0px;width:1296.0px;height:5.5px;background:#808080;"></div>
<span class="a t" style="left:2263.3px;transform:scaleX(0.7990);transform-origin:0 50%;top:1497.4px;font-size:22.5px;color:#505050;font-weight:700;font-family:"Liberation Serif";">23</span>
<div class="a" style="left:858.0px;top:527.5px;width:44.0px;height:2.0px;background:#222;"></div>
<div class="a" style="left:858.0px;top:637.0px;width:44.0px;height:2.0px;background:#222;"></div>
<div class="a" style="left:858.0px;top:784.0px;width:44.0px;height:2.0px;background:#222;"></div>
<div class="a" style="left:858.0px;top:1136.0px;width:44.0px;height:2.0px;background:#222;"></div>
<div class="a" style="left:858.0px;top:1488.5px;width:44.0px;height:2.0px;background:#222;"></div>
<div class="a" style="left:2336.0px;top:638.5px;width:44.0px;height:2.0px;background:#222;"></div>
<div class="a" style="left:2321.0px;top:689.5px;width:44.0px;height:2.0px;background:#222;"></div>
<div class="a" style="left:2316.0px;top:1136.5px;width:44.0px;height:2.0px;background:#222;"></div>
<div class="a" style="left:2336.0px;top:1489.0px;width:44.0px;height:2.0px;background:#222;"></div>
<div class="a" style="left:2841.0px;top:494.0px;width:39.0px;height:1039.0px;background:#f0f0f0;"></div>
<div class="a" style="left:2841.0px;top:497.0px;width:37.0px;height:36.0px;background:#ffffff;border:1.5px solid #a8a8a8;box-sizing:border-box;"></div>
<svg class="a" style="left:2850.5px;top:509.5px;" width="18" height="11" viewBox="0 0 18 11"><path d="M0 11 L9 0 L18 11Z" fill="#222"/></svg>
<div class="a" style="left:2841.0px;top:945.0px;width:38.0px;height:38.5px;background:#ffffff;border:1.8px solid #9a9a9a;box-sizing:border-box;"></div>
<div class="a" style="left:2841.0px;top:1373.0px;width:37.0px;height:36.0px;background:#ffffff;border:1.5px solid #a8a8a8;box-sizing:border-box;"></div>
<svg class="a" style="left:2850.5px;top:1385.5px;" width="18" height="11" viewBox="0 0 18 11"><path d="M0 0 L9 11 L18 0Z" fill="#222"/></svg>
<svg class="a" style="left:2850.0px;top:1416.0px;" width="20" height="30" viewBox="0 0 20 30"><path d="M10 0 L19 12 H14 L19 18 H1 L6 12 H1Z" fill="#5f5f5f"/><rect x="3" y="20" width="14" height="3" fill="#5f5f5f"/></svg>
<svg class="a" style="left:2850.0px;top:1455.0px;" width="20" height="30" viewBox="0 0 20 30"><path d="M10 30 L19 18 H14 L19 12 H1 L6 18 H1Z" fill="#5f5f5f"/><rect x="3" y="7" width="14" height="3" fill="#5f5f5f"/></svg>
<div class="a" style="left:370.0px;top:1532.0px;width:2510.0px;height:2.0px;background:#c8c8c8;"></div>
<div class="a" style="left:370.0px;top:1534.0px;width:2471.0px;height:72.0px;background:#e6e6e6;"></div>
<span class="a t" style="left:396.0px;transform:scaleX(0.9439);transform-origin:0 50%;top:1551.2px;font-size:34px;color:#5a5a5a;">Нотатки до слайда</span>
<div class="a" style="left:2841.0px;top:1534.0px;width:39.0px;height:72.0px;background:#f0f0f0;"></div>
<div class="a" style="left:2841.0px;top:1540.0px;width:37.0px;height:31.0px;background:#ffffff;border:1.5px solid #a8a8a8;box-sizing:border-box;"></div>
<svg class="a" style="left:2850.5px;top:1550.0px;" width="18" height="11" viewBox="0 0 18 11"><path d="M0 11 L9 0 L18 11Z" fill="#222"/></svg>
<div class="a" style="left:2841.0px;top:1572.5px;width:37.0px;height:31.0px;background:#ffffff;border:1.5px solid #a8a8a8;box-sizing:border-box;"></div>
<svg class="a" style="left:2850.5px;top:1582.5px;" width="18" height="11" viewBox="0 0 18 11"><path d="M0 0 L9 11 L18 0Z" fill="#222"/></svg>
<div class="a" style="left:0.0px;top:1606.0px;width:2880.0px;height:50.0px;background:#f3f3f3;"></div>
<div class="a" style="left:0.0px;top:1606.0px;width:2880.0px;height:1.5px;background:#d6d6d6;"></div>
<span class="a t" style="left:26.0px;transform:scaleX(0.9992);transform-origin:0 50%;top:1621.8px;font-size:22.5px;color:#444444;">Слайд 23 з 43</span>
<svg class="a" style="left:216.0px;top:1618.0px;" width="33" height="28" viewBox="0 0 33 28"><path d="M1 1 H15 V24 H1Z M15 1 H28 V6 M15 24 H19" fill="none" stroke="#6a6a6a" stroke-width="1.8"/><path d="M15 24 L15 27" stroke="#6a6a6a" stroke-width="1.5"/><path d="M22 9 L31 18 M31 9 L22 18" stroke="#555" stroke-width="3.2"/></svg>
<span class="a t" style="left:285.6px;transform:scaleX(1.0257);transform-origin:0 50%;top:1621.8px;font-size:22.5px;color:#444444;">російська (Україна)</span>
<svg class="a" style="left:530.0px;top:1617.0px;" width="33" height="33" viewBox="0 0 33 33"><path d="M9 9 A12 12 0 1 0 14 26" fill="none" stroke="#555" stroke-width="2" stroke-dasharray="3 3"/><path d="M13 0 V14 L10 11 M13 14 L16 11" stroke="#555" stroke-width="2" fill="none"/><path d="M18 18 L31 31 M31 18 L18 31" stroke="#444" stroke-width="3"/><path d="M17 12 H28 L25 9 M28 12 L25 15" stroke="#555" stroke-width="1.8" fill="none"/></svg>
<span class="a t" style="left:569.0px;transform:scaleX(1.0606);transform-origin:0 50%;top:1621.8px;font-size:22.5px;color:#333;font-weight:700;">Спеціальні можливості: щось не так</span>
<svg class="a" style="left:1729.0px;top:1617.0px;" width="27" height="30" viewBox="0 0 27 30"><path d="M13 0 L19 7 H7Z" fill="#666"/><path d="M0 12 H26 M3 18 H23 M0 24 H26 M5 29 H21" stroke="#666" stroke-width="1.8"/></svg>
<span class="a t" style="left:1766.0px;transform:scaleX(1.0594);transform-origin:0 50%;top:1621.8px;font-size:22.5px;color:#444444;">Нотатки</span>
<svg class="a" style="left:1897.0px;top:1623.0px;" width="33" height="31" viewBox="0 0 33 31"><path d="M2 0 H31 C32 0 33 1 33 2 V19 C33 20 32 21 31 21 H12 L5 29 V21 H2 C1 21 0 20 0 19 V2 C0 1 1 0 2 0Z" fill="#5f5f5f"/></svg>
<span class="a t" style="left:1937.0px;transform:scaleX(1.0693);transform-origin:0 50%;top:1621.8px;font-size:22.5px;color:#444444;">Примітки</span>
<div class="a" style="left:2081.0px;top:1607.0px;width:89.0px;height:48.5px;background:#cacaca;"></div>
<svg class="a" style="left:2111.0px;top:1617.0px;" width="29" height="28" viewBox="0 0 29 28"><rect x="1" y="1" width="27" height="26" fill="none" stroke="#6a6a6a" stroke-width="1.8"/><path d="M7 1 V27 M7 20 H28" stroke="#6a6a6a" stroke-width="1.6"/><rect x="12" y="6" width="9" height="8" fill="none" stroke="#6a6a6a" stroke-width="1.6"/></svg>
<svg class="a" style="left:2200.0px;top:1617.0px;" width="29" height="28" viewBox="0 0 29 28"><rect x="1" y="1" width="11" height="11" fill="none" stroke="#6a6a6a" stroke-width="1.8"/><rect x="17" y="1" width="11" height="11" fill="none" stroke="#6a6a6a" stroke-width="1.8"/><rect x="1" y="16" width="11" height="11" fill="none" stroke="#6a6a6a" stroke-width="1.8"/><rect x="17" y="16" width="11" height="11" fill="none" stroke="#6a6a6a" stroke-width="1.8"/></svg>
<svg class="a" style="left:2290.0px;top:1617.0px;" width="29" height="30" viewBox="0 0 29 30"><path d="M1 3 C6 1 10 1 14.5 3 C19 1 23 1 28 3 V26 C23 24 19 24 14.5 26 C10 24 6 24 1 26Z M14.5 3 V29" fill="none" stroke="#6a6a6a" stroke-width="1.8"/><path d="M4 8 H11 M4 12 H11 M4 16 H11 M4 20 H11 M18 8 H25 M18 12 H25 M18 16 H25 M18 20 H25" stroke="#6a6a6a" stroke-width="1.4"/></svg>
<svg class="a" style="left:2381.0px;top:1617.0px;" width="29" height="32" viewBox="0 0 29 32"><path d="M0 1 H29" stroke="#6a6a6a" stroke-width="2"/><rect x="3" y="3" width="23" height="15" fill="none" stroke="#6a6a6a" stroke-width="1.8"/><path d="M14.5 18 V30 M8 30 H21 M8 8 H20" stroke="#6a6a6a" stroke-width="1.8"/></svg>
<div class="a" style="left:2453.0px;top:1631.0px;width:17.0px;height:2.0px;background:#555;"></div>
<div class="a" style="left:2482.0px;top:1630.5px;width:222.0px;height:2.4px;background:#444;"></div>
<div class="a" style="left:2546.0px;top:1618.0px;width:12.0px;height:28.0px;background:#4a4a4a;"></div>
<div class="a" style="left:2591.5px;top:1624.0px;width:3.0px;height:16.0px;background:#444;"></div>
<svg class="a" style="left:2716.0px;top:1622.0px;" width="19" height="19" viewBox="0 0 19 19"><path d="M9.5 0 V19 M0 9.5 H19" stroke="#555" stroke-width="2"/></svg>
<span class="a t" style="left:2762.0px;transform:scaleX(0.9990);transform-origin:0 50%;top:1621.5px;font-size:23px;color:#555;">64%</span>
<svg class="a" style="left:2842.0px;top:1618.0px;" width="24" height="24" viewBox="0 0 24 24"><rect x="1" y="1" width="22" height="22" fill="none" stroke="#777" stroke-width="1.4"/><path d="M12 4 V20 M4 12 H20 M9 7 L12 4 L15 7 M9 17 L12 20 L15 17 M7 9 L4 12 L7 15 M17 9 L20 12 L17 15" stroke="#777" stroke-width="1.3" fill="none"/></svg>
<div class="a" style="left:0.0px;top:1656.0px;width:2880.0px;height:144.0px;background:#17181c;"></div>
<span class="a t" style="left:60.4px;transform:scaleX(1.0020);transform-origin:50% 50%;top:1759.3px;font-size:24.5px;color:#d8d8d8;">Audio</span>
<span class="a t" style="left:238.5px;transform:scaleX(1.0027);transform-origin:50% 50%;top:1759.3px;font-size:24.5px;color:#d8d8d8;">Video</span>
<span class="a t" style="left:789.3px;transform:scaleX(1.0327);transform-origin:50% 50%;top:1759.3px;font-size:24.5px;color:#d8d8d8;">Participants</span>
<span class="a t" style="left:1033.6px;transform:scaleX(0.9987);transform-origin:50% 50%;top:1759.3px;font-size:24.5px;color:#d8d8d8;">Chat</span>
<span class="a t" style="left:1198.0px;transform:scaleX(0.9966);transform-origin:50% 50%;top:1759.3px;font-size:24.5px;color:#d8d8d8;">React</span>
<span class="a t" style="left:1366.3px;transform:scaleX(0.9696);transform-origin:50% 50%;top:1759.3px;font-size:24.5px;color:#d8d8d8;">Share</span>
<span class="a t" style="left:1515.5px;transform:scaleX(1.0437);transform-origin:50% 50%;top:1759.3px;font-size:24.5px;color:#d8d8d8;">Host tools</span>
<span class="a t" style="left:1711.1px;transform:scaleX(1.0028);transform-origin:50% 50%;top:1759.3px;font-size:24.5px;color:#d8d8d8;">Apps</span>
<span class="a t" style="left:1873.5px;transform:scaleX(0.9939);transform-origin:50% 50%;top:1759.3px;font-size:24.5px;color:#d8d8d8;">Record</span>
<span class="a t" style="left:2018.8px;transform:scaleX(1.0396);transform-origin:50% 50%;top:1759.3px;font-size:24.5px;color:#d8d8d8;">Whiteboards</span>
<span class="a t" style="left:2230.1px;transform:scaleX(0.9995);transform-origin:50% 50%;top:1759.3px;font-size:24.5px;color:#d8d8d8;">More</span>
<span class="a t" style="left:2773.2px;transform:scaleX(0.9497);transform-origin:50% 50%;top:1759.3px;font-size:24.5px;color:#d8d8d8;">End</span>
<svg class="a" style="left:148.0px;top:1713.0px;" width="17" height="11" viewBox="0 0 17 11"><path d="M1.5 10 L8.5 2 L15.5 10" stroke="#e8e8e8" stroke-width="2.6" fill="none"/></svg>
<svg class="a" style="left:326.0px;top:1713.0px;" width="17" height="11" viewBox="0 0 17 11"><path d="M1.5 10 L8.5 2 L15.5 10" stroke="#e8e8e8" stroke-width="2.6" fill="none"/></svg>
<svg class="a" style="left:937.0px;top:1713.0px;" width="17" height="11" viewBox="0 0 17 11"><path d="M1.5 10 L8.5 2 L15.5 10" stroke="#e8e8e8" stroke-width="2.6" fill="none"/></svg>
<svg class="a" style="left:1116.0px;top:1713.0px;" width="17" height="11" viewBox="0 0 17 11"><path d="M1.5 10 L8.5 2 L15.5 10" stroke="#e8e8e8" stroke-width="2.6" fill="none"/></svg>
<svg class="a" style="left:1278.0px;top:1713.0px;" width="17" height="11" viewBox="0 0 17 11"><path d="M1.5 10 L8.5 2 L15.5 10" stroke="#e8e8e8" stroke-width="2.6" fill="none"/></svg>
<svg class="a" style="left:1456.0px;top:1713.0px;" width="17" height="11" viewBox="0 0 17 11"><path d="M1.5 10 L8.5 2 L15.5 10" stroke="#e8e8e8" stroke-width="2.6" fill="none"/></svg>
<svg class="a" style="left:1796.0px;top:1713.0px;" width="17" height="11" viewBox="0 0 17 11"><path d="M1.5 10 L8.5 2 L15.5 10" stroke="#e8e8e8" stroke-width="2.6" fill="none"/></svg>
<svg class="a" style="left:2144.0px;top:1713.0px;" width="17" height="11" viewBox="0 0 17 11"><path d="M1.5 10 L8.5 2 L15.5 10" stroke="#e8e8e8" stroke-width="2.6" fill="none"/></svg>
<svg class="a" style="left:68.0px;top:1695.0px;" width="48" height="50" viewBox="0 0 48 50"><rect x="17" y="1.5" width="15" height="27" rx="7.5" fill="none" stroke="#fff" stroke-width="3"/><path d="M9 22 C9 33 15 38 24.5 38 C34 38 40 33 40 22" fill="none" stroke="#fff" stroke-width="3"/><path d="M24.5 38 V48 M16 48 H33" stroke="#fff" stroke-width="3"/><path d="M2 47 L45 3" stroke="#e8365a" stroke-width="4" stroke-linecap="round"/></svg>
<svg class="a" style="left:246.0px;top:1706.0px;" width="49" height="30" viewBox="0 0 49 30"><rect x="1.5" y="1.5" width="32" height="27" rx="6" fill="none" stroke="#fff" stroke-width="3"/><path d="M34 11 L47 2.5 V27.5 L34 19" fill="none" stroke="#fff" stroke-width="3" stroke-linejoin="round"/></svg>
<svg class="a" style="left:835.0px;top:1703.0px;" width="38" height="36" viewBox="0 0 38 36"><circle cx="11" cy="8" r="6" fill="none" stroke="#fff" stroke-width="3"/><circle cx="26" cy="14" r="6" fill="none" stroke="#fff" stroke-width="3"/><path d="M2 33 V27 C2 21 6 18 11 18 C13 18 15 19 16 20" fill="none" stroke="#fff" stroke-width="3"/><rect x="15" y="24" width="21" height="10" rx="5" fill="none" stroke="#fff" stroke-width="3"/><path d="M2 33 H14" stroke="#fff" stroke-width="3"/></svg>
<span class="a t" style="left:885.5px;transform:scaleX(0.9631);transform-origin:0 50%;top:1706.3px;font-size:24.5px;color:#e8e8e8;">11</span>
<svg class="a" style="left:1036.0px;top:1697.0px;" width="45" height="46" viewBox="0 0 45 46"><path d="M14 9 V6 C14 3 16 1.5 19 1.5 H38 C41 1.5 43 3 43 6 V20 C43 23 41 25 38 25" fill="none" stroke="#fff" stroke-width="3"/><path d="M6 10 H30 C33 10 35 12 35 15 V30 C35 33 33 35 30 35 H18 L8 43 V35 H6 C3 35 1.5 33 1.5 30 V15 C1.5 12 3 10 6 10Z" fill="none" stroke="#fff" stroke-width="3" stroke-linejoin="round"/><circle cx="11" cy="23" r="2.3" fill="#fff"/><circle cx="18.5" cy="23" r="2.3" fill="#fff"/><circle cx="26" cy="23" r="2.3" fill="#fff"/></svg>
<svg class="a" style="left:1206.0px;top:1699.0px;" width="48" height="42" viewBox="0 0 48 42"><path d="M24 40 C12 31 1.5 24 1.5 13 C1.5 6 7 1.5 13 1.5 C18 1.5 22 4 24 8 C26 4 30 1.5 35 1.5 C41 1.5 46.5 6 46.5 13 C46.5 24 36 31 24 40Z" fill="none" stroke="#fff" stroke-width="3" stroke-linejoin="round"/></svg>
<svg class="a" style="left:1376.0px;top:1700.0px;" width="48" height="40" viewBox="0 0 48 40"><rect x="0" y="0" width="48" height="40" rx="6" fill="#74f59c"/><path d="M24 31 V12 M15 20 L24 10.5 L33 20" fill="none" stroke="#0e0e10" stroke-width="4.2" stroke-linejoin="miter"/></svg>
<svg class="a" style="left:1552.0px;top:1700.0px;" width="36" height="41" viewBox="0 0 36 41"><path d="M18 1.5 C24 5 29 6.5 34.5 7 V17 C34.5 28 27 36 18 39.5 C9 36 1.5 28 1.5 17 V7 C7 6.5 12 5 18 1.5Z" fill="none" stroke="#fff" stroke-width="3"/><path d="M18 5 V20 H31 V17 C31 14 31 10 31 9.5 C26 9 22 7.5 18 5Z M18 20 H5 C6 28 11 33 18 36Z" fill="#fff"/></svg>
<svg class="a" style="left:1718.0px;top:1699.0px;" width="44" height="43" viewBox="0 0 44 43"><path d="M15 2 H8 C4.5 2 2 4.5 2 8 V15" fill="none" stroke="#fff" stroke-width="3"/><circle cx="34.5" cy="9.5" r="7.5" fill="none" stroke="#fff" stroke-width="3"/><circle cx="9.5" cy="33.5" r="7.5" fill="none" stroke="#fff" stroke-width="3"/><path d="M29 41 H36 C39.5 41 42 38.5 42 35 V28" fill="none" stroke="#fff" stroke-width="3"/></svg>
<svg class="a" style="left:1891.0px;top:1698.0px;" width="45" height="45" viewBox="0 0 45 45"><circle cx="22.5" cy="22.5" r="20.5" fill="none" stroke="#fff" stroke-width="3"/><circle cx="22.5" cy="22.5" r="8.5" fill="#fff"/></svg>
<svg class="a" style="left:2064.0px;top:1700.0px;" width="49" height="41" viewBox="0 0 49 41"><path d="M20 33 H6 C3.5 33 1.5 31 1.5 28.5 V6 C1.5 3.5 3.5 1.5 6 1.5 H42 C44.5 1.5 46.5 3.5 46.5 6 V28" fill="none" stroke="#fff" stroke-width="3"/><path d="M26 33 C26 30 28 29 31 29 H46 C47.5 29 48 30 48 31.5 V36 C48 38 47 39 45 39 H31 C28 39 26 37 26 35Z" fill="#fff"/></svg>
<svg class="a" style="left:2234.0px;top:1696.0px;" width="48" height="48" viewBox="0 0 48 48"><circle cx="24" cy="24" r="22" fill="none" stroke="#fff" stroke-width="3"/><circle cx="14" cy="24" r="2.8" fill="#fff"/><circle cx="24" cy="24" r="2.8" fill="#fff"/><circle cx="34" cy="24" r="2.8" fill="#fff"/></svg>
<svg class="a" style="left:2771.0px;top:1698.0px;" width="50" height="44" viewBox="0 0 50 44"><path d="M13 2 H37 L48 22 L37 42 H13 L2 22Z" fill="none" stroke="#e8365a" stroke-width="3" stroke-linejoin="round"/><path d="M18 14 L32 28 M32 14 L18 28" stroke="#fff" stroke-width="5" stroke-linecap="round"/></svg>
<div class="a" style="left:2355.0px;top:157.0px;width:494.0px;height:283.0px;background:rgba(0,0,0,0.18);border-radius:21px;filter:blur(4px);"></div>
<div class="a" style="left:2358.0px;top:160.0px;width:488.0px;height:277.0px;background:#050505;border-radius:17px;"></div>
<svg class="a" style="left:2362.0px;top:164.0px;" width="480" height="270" viewBox="0 0 480 270">
<defs>
<clipPath id="vc"><rect width="480" height="270" rx="13"/></clipPath>
<filter id="vb"><feGaussianBlur stdDeviation="1.2"/></filter>
<radialGradient id="face" cx="0.45" cy="0.3" r="0.75"><stop offset="0" stop-color="#f6eef4"/><stop offset="0.45" stop-color="#ecd8e0"/><stop offset="0.8" stop-color="#d8b4bc"/><stop offset="1" stop-color="#c49aa4"/></radialGradient>
<linearGradient id="shade" x1="0" y1="0" x2="1" y2="0"><stop offset="0" stop-color="#000" stop-opacity="0.02"/><stop offset="0.35" stop-color="#000" stop-opacity="0.12"/><stop offset="1" stop-color="#000" stop-opacity="0.42"/></linearGradient><linearGradient id="fshade" x1="0" y1="0" x2="1" y2="0"><stop offset="0" stop-color="#fff" stop-opacity="0.35"/><stop offset="0.45" stop-color="#fff" stop-opacity="0"/><stop offset="0.75" stop-color="#6a3a30" stop-opacity="0.18"/><stop offset="1" stop-color="#4a2a20" stop-opacity="0.4"/></linearGradient>
<linearGradient id="ceil" x1="0" y1="0" x2="0" y2="1"><stop offset="0" stop-color="#e2e2e0"/><stop offset="1" stop-color="#f0f0ee"/></linearGradient>
</defs>
<g clip-path="url(#vc)"><g filter="url(#vb)">
<rect x="-5" y="-5" width="490" height="280" fill="#e4e4e4"/>
<path d="M-5 -5 H485 V15 C380 12 260 22 200 32 L80 30 L-5 22Z" fill="url(#ceil)"/>
<rect x="0" y="26" width="80" height="196" fill="#fafafa"/>
<path d="M0 89 H80 M0 152 H80" stroke="#d2d2d2" stroke-width="5"/>
<path d="M80 30 V222" stroke="#e6e6e6" stroke-width="6"/>
<rect x="82" y="36" width="24" height="190" fill="#e2e2e2"/>
<rect x="106" y="36" width="90" height="192" fill="#dcdcdc"/>
<g stroke="#f6f6f6" stroke-width="6">
<path d="M107 40 V228 M134 38 V228 M164 36 V228 M194 34 V228"/>
<path d="M106 68 H196 M106 106 H196 M106 146 H196 M106 186 H196 M106 222 H196"/>
</g>
<rect x="196" y="30" width="122" height="196" fill="#e4e4e6"/>
<rect x="317" y="-5" width="168" height="280" fill="#d9d9db"/>
<g stroke="#f4f4f4" stroke-width="7">
<path d="M320 -5 V275 M368 -5 V275 M425 -5 V275"/>
<path d="M317 18 L480 12 M317 42 L480 36 M317 88 L480 84 M317 144 L480 142 M317 200 L480 200 M317 258 H480"/>
</g>
<path d="M92 126 L100 106 H112 L118 126Z" fill="#f8f8f8"/>
<rect x="116" y="89" width="15" height="17" fill="#2a2838"/>
<rect x="182" y="82" width="10" height="20" fill="#3a2226"/>
<rect x="146" y="126" width="14" height="19" fill="#5aa060"/>
<rect x="166" y="124" width="18" height="21" fill="#243a2c"/>
<rect x="141" y="166" width="20" height="19" fill="#2a3040"/>
<rect x="120" y="130" width="12" height="15" fill="#e07a70"/>
<rect x="338" y="59" width="26" height="27" fill="#34285a"/>
<rect x="350" y="114" width="12" height="26" fill="#241c24"/>
<rect x="376" y="116" width="22" height="24" fill="#2a2040"/><rect x="390" y="116" width="8" height="10" fill="#c82a30"/>
<rect x="0" y="186" width="80" height="38" fill="#cfcfcf"/>
<rect x="317" y="-5" width="168" height="280" fill="url(#shade)"/>
<rect x="380" y="259" width="100" height="12" fill="#a89a80"/>
<rect x="0" y="262" width="200" height="10" fill="#b0a488"/>
<path d="M339 223 C370 236 410 250 445 275 H339Z" fill="#2a2230"/>
<path d="M321 275 L328 236 L339 226 L339 275Z" fill="#ece6ee"/>
<path d="M326 242 L324 270 M331 238 L329 270 M336 234 L334 270" stroke="#7a6070" stroke-width="1.6"/>
<path d="M186 135 C182 80 212 36 266 35 C322 34 352 78 352 135 C352 170 350 200 340 224 C332 245 326 262 322 275 H210 C200 250 190 200 186 135Z" fill="url(#face)"/>
<path d="M186 135 C182 80 212 36 266 35 C322 34 352 78 352 135 C352 170 350 200 340 224 C332 245 326 262 322 275 H210 C200 250 190 200 186 135Z" fill="url(#fshade)"/>
<path d="M184 128 C184 74 214 34 266 34 C318 33 352 70 354 128 C350 108 344 92 334 80 C324 64 300 56 270 56 C240 56 216 64 204 78 C194 90 188 108 184 128Z" fill="#6e6266"/>
<path d="M210 64 C228 52 250 48 268 48 C292 48 312 54 330 66 C306 60 286 58 266 58 C246 58 226 60 210 64Z" fill="#8a7e82"/>
<path d="M186 150 C176 148 176 196 188 204 Z M350 150 C360 150 360 198 348 206Z" fill="#d2aab2"/>
<g fill="none" stroke="#40363a" stroke-width="2.8"><path d="M186 136 H248 C251 136 252 138 252 141 L250 166 C249 170 247 172 244 172 H196 C191 172 189 170 189 166Z"/><path d="M270 134 H345 C349 134 351 137 350 141 L346 166 C345 170 342 172 338 172 H280 C275 172 273 170 272 166Z"/><path d="M252 142 H270 M186 138 L178 138 M350 138 L358 138"/></g>
<path d="M196 126 C210 120 232 120 248 128 M282 126 C300 118 324 118 344 126" stroke="#5a4a4e" stroke-width="5" fill="none"/>
<ellipse cx="222" cy="152" rx="10" ry="5" fill="#6a6070"/>
<ellipse cx="298" cy="150" rx="11" ry="5.5" fill="#6a6072"/>
<path d="M262 160 C258 180 254 196 256 204 C262 210 276 210 284 204" stroke="#c49aa2" stroke-width="5" fill="none"/>
<path d="M230 222 C248 214 272 214 290 222 C280 238 250 240 230 222Z" fill="#b88a92"/>
<path d="M206 206 C210 226 220 242 236 252 M320 206 C316 226 306 242 292 252" stroke="#cfa8b0" stroke-width="6" fill="none"/>
</g></g>
</svg>
<div class="a" style="left:2366.0px;top:390.0px;width:199.6px;height:39.5px;background:rgba(54,50,48,0.92);border-radius:8px;"></div>
<span class="a t" style="left:2375.0px;transform:scaleX(1.0293);transform-origin:0 50%;top:396.8px;font-size:25px;color:#ffffff;">Wiktor Trynczuk</span>
<div class="a" style="left:56.0px;top:1543.8px;width:95.7px;height:95.7px;background:#262729;border-radius:50%;"></div>
<svg class="a" style="left:82.0px;top:1567.0px;" width="44" height="50" viewBox="0 0 44 50"><path d="M1 30.5 L32.1 1.5 L42.9 11.7 L12.2 42.4 H1 Z" fill="none" stroke="#74f59c" stroke-width="3.2" stroke-linejoin="round"/><path d="M24 10 L34.5 20.5" stroke="#74f59c" stroke-width="3"/><path d="M1.5 47.2 H42.4" stroke="#74f59c" stroke-width="3.4" stroke-linecap="round"/></svg>
<div class="a" style="left:0.0px;top:0.0px;width:22.0px;height:22.0px;background:radial-gradient(circle 22px at 100% 100%, transparent 21px, #000 22px);"></div>
<div class="a" style="left:2858.0px;top:0.0px;width:22.0px;height:22.0px;background:radial-gradient(circle 22px at 0% 100%, transparent 21px, #000 22px);"></div>
<div class="a" style="left:0.0px;top:1778.0px;width:22.0px;height:22.0px;background:radial-gradient(circle 22px at 100% 0%, transparent 21px, #000 22px);"></div>
<div class="a" style="left:2858.0px;top:1778.0px;width:22.0px;height:22.0px;background:radial-gradient(circle 22px at 0% 0%, transparent 21px, #000 22px);"></div></body></html>
